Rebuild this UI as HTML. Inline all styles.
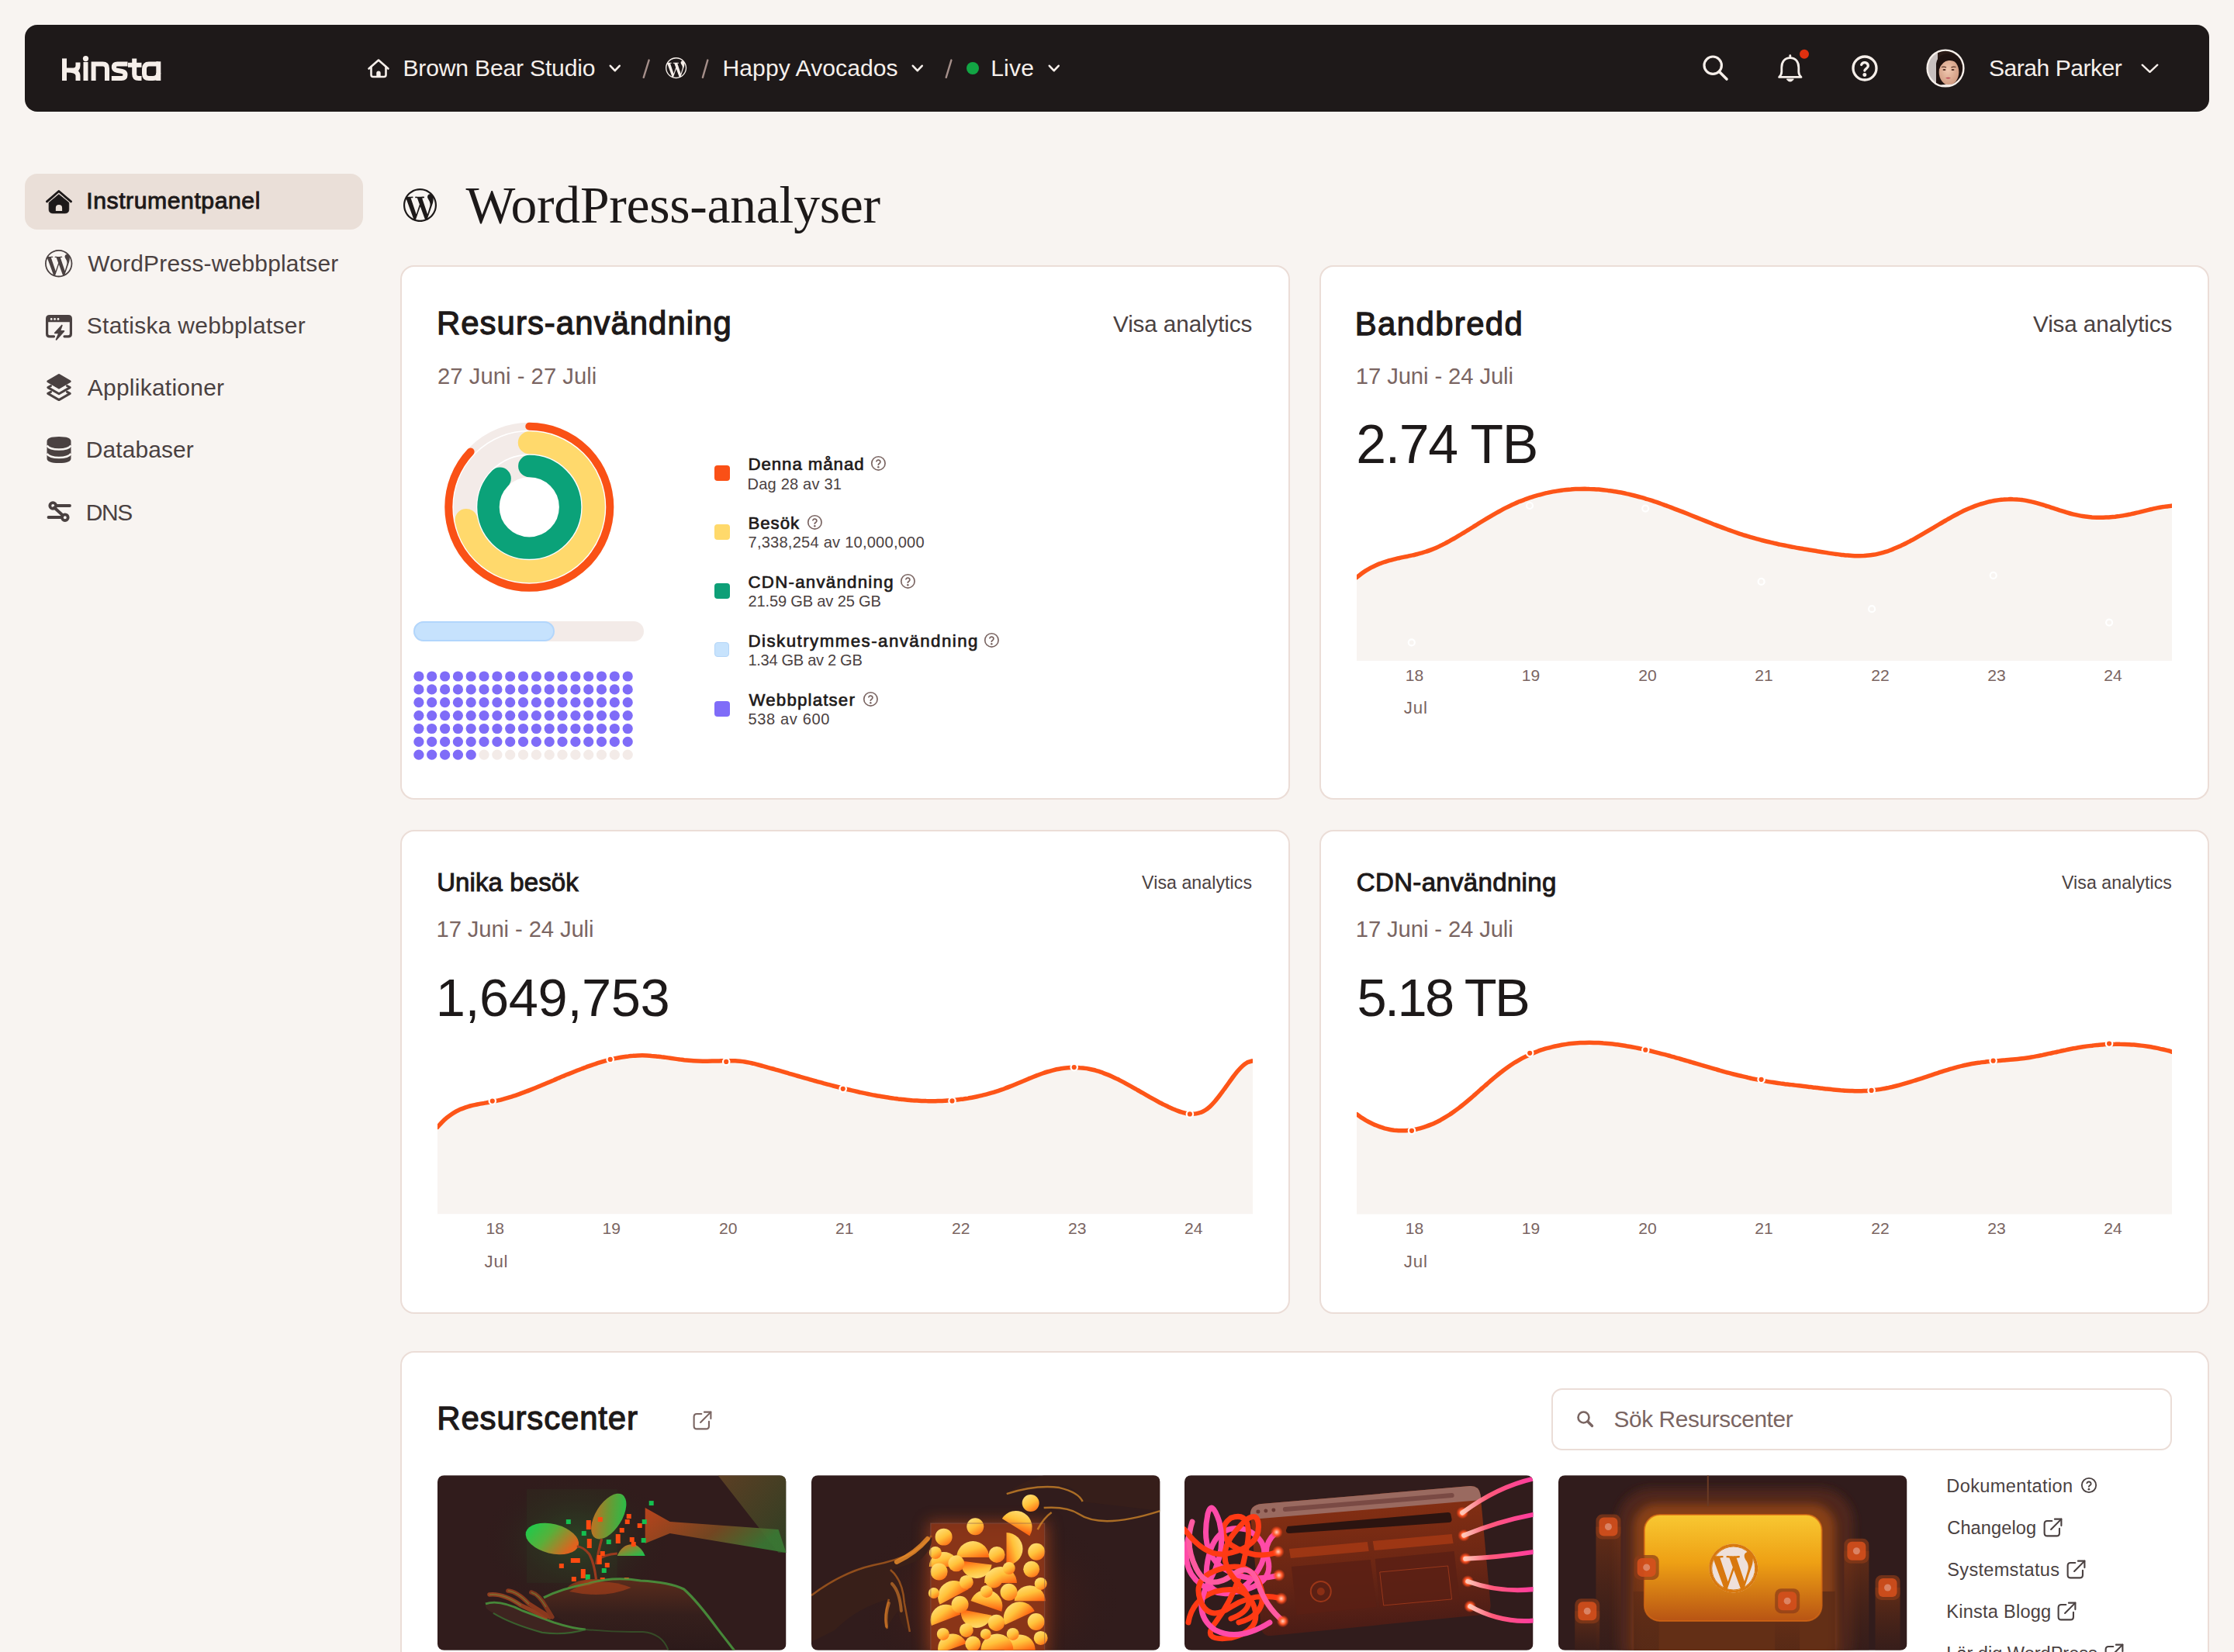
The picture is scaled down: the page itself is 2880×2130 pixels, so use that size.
<!DOCTYPE html><html><head><meta charset="utf-8"><title>WordPress-analyser</title><style>
html,body{margin:0;padding:0;width:2880px;height:2130px;overflow:hidden;background:#f8f4f1;font-family:"Liberation Sans",sans-serif;}
.a{position:absolute;}.t{position:absolute;white-space:nowrap;line-height:1;}
svg{position:absolute;overflow:visible;}
</style></head><body>
<div class="a" style="left:0;top:0;width:2880px;height:2130px;overflow:hidden">
<div class="a" style="left:32px;top:32px;width:2816px;height:112px;border-radius:16px;background:#1e1919"></div>
<div class="a" style="left:32px;top:224px;width:436px;height:72px;border-radius:16px;background:#eadfd8"></div>
<div class="a" style="left:516px;top:342px;width:1143px;height:685px;border:2px solid #ebddd7;border-radius:18px;background:#fff"></div>
<div class="a" style="left:1701px;top:342px;width:1143px;height:685px;border:2px solid #ebddd7;border-radius:18px;background:#fff"></div>
<div class="a" style="left:516px;top:1070px;width:1143px;height:620px;border:2px solid #ebddd7;border-radius:18px;background:#fff"></div>
<div class="a" style="left:1701px;top:1070px;width:1143px;height:620px;border:2px solid #ebddd7;border-radius:18px;background:#fff"></div>
<div class="a" style="left:516px;top:1742px;width:2328px;height:496px;border:2px solid #ebddd7;border-radius:18px;background:#fff"></div>
<svg style="left:0;top:0" width="2880" height="2130"><defs><clipPath id="cl2"><rect x="1749" y="560" width="1051" height="292"/></clipPath></defs><g clip-path="url(#cl2)"><path d="M1749.0 744.5 C1750.0 743.7 1753.0 741.2 1755.0 739.7 C1757.0 738.2 1759.0 736.9 1761.0 735.6 C1763.0 734.4 1765.0 733.2 1767.0 732.1 C1769.0 731.1 1771.0 730.1 1773.0 729.2 C1775.0 728.3 1777.0 727.4 1779.0 726.7 C1781.0 725.9 1783.0 725.2 1785.0 724.5 C1787.0 723.9 1789.0 723.3 1791.0 722.7 C1793.0 722.1 1795.0 721.6 1797.0 721.1 C1799.0 720.6 1801.0 720.2 1803.0 719.7 C1805.0 719.3 1807.0 718.9 1809.0 718.4 C1811.0 718.0 1813.0 717.6 1815.0 717.2 C1817.0 716.7 1819.0 716.3 1821.0 715.9 C1823.0 715.4 1825.0 715.0 1827.0 714.5 C1829.0 714.0 1831.0 713.4 1833.0 712.9 C1835.0 712.3 1837.0 711.7 1839.0 711.0 C1841.0 710.4 1843.0 709.7 1845.0 708.9 C1847.0 708.1 1849.0 707.3 1851.0 706.4 C1853.0 705.5 1855.0 704.6 1857.0 703.6 C1859.0 702.7 1861.0 701.6 1863.0 700.6 C1865.0 699.5 1867.0 698.5 1869.0 697.4 C1871.0 696.3 1873.0 695.1 1875.0 694.0 C1877.0 692.8 1879.0 691.6 1881.0 690.4 C1883.0 689.3 1885.0 688.0 1887.0 686.8 C1889.0 685.6 1891.0 684.4 1893.0 683.2 C1895.0 681.9 1897.0 680.7 1899.0 679.5 C1901.0 678.2 1903.0 677.0 1905.0 675.7 C1907.0 674.5 1909.0 673.3 1911.0 672.0 C1913.0 670.8 1915.0 669.6 1917.0 668.4 C1919.0 667.2 1921.0 666.0 1923.0 664.8 C1925.0 663.7 1927.0 662.5 1929.0 661.4 C1931.0 660.3 1933.0 659.2 1935.0 658.1 C1937.0 657.0 1939.0 655.9 1941.0 654.9 C1943.0 653.9 1945.0 652.9 1947.0 652.0 C1949.0 651.0 1951.0 650.1 1953.0 649.2 C1955.0 648.3 1957.0 647.5 1959.0 646.6 C1961.0 645.8 1963.0 645.0 1965.0 644.3 C1967.0 643.5 1969.0 642.8 1971.0 642.1 C1973.0 641.4 1975.0 640.8 1977.0 640.1 C1979.0 639.5 1981.0 638.9 1983.0 638.4 C1985.0 637.8 1987.0 637.3 1989.0 636.8 C1991.0 636.3 1993.0 635.8 1995.0 635.4 C1997.0 634.9 1999.0 634.5 2001.0 634.1 C2003.0 633.8 2005.0 633.4 2007.0 633.1 C2009.0 632.8 2011.0 632.5 2013.0 632.2 C2015.0 631.9 2017.0 631.7 2019.0 631.5 C2021.0 631.3 2023.0 631.1 2025.0 631.0 C2027.0 630.8 2029.0 630.7 2031.0 630.6 C2033.0 630.5 2035.0 630.4 2037.0 630.4 C2039.0 630.3 2041.0 630.3 2043.0 630.3 C2045.0 630.4 2047.0 630.4 2049.0 630.5 C2051.0 630.5 2053.0 630.6 2055.0 630.7 C2057.0 630.8 2059.0 631.0 2061.0 631.1 C2063.0 631.3 2065.0 631.5 2067.0 631.7 C2069.0 631.9 2071.0 632.1 2073.0 632.4 C2075.0 632.6 2077.0 632.9 2079.0 633.2 C2081.0 633.5 2083.0 633.9 2085.0 634.2 C2087.0 634.6 2089.0 634.9 2091.0 635.3 C2093.0 635.7 2095.0 636.1 2097.0 636.6 C2099.0 637.0 2101.0 637.5 2103.0 638.0 C2105.0 638.4 2107.0 638.9 2109.0 639.5 C2111.0 640.0 2113.0 640.5 2115.0 641.1 C2117.0 641.7 2119.0 642.2 2121.0 642.8 C2123.0 643.4 2125.0 644.1 2127.0 644.7 C2129.0 645.3 2131.0 646.0 2133.0 646.7 C2135.0 647.3 2137.0 648.0 2139.0 648.7 C2141.0 649.4 2143.0 650.1 2145.0 650.8 C2147.0 651.5 2149.0 652.3 2151.0 653.0 C2153.0 653.8 2155.0 654.5 2157.0 655.3 C2159.0 656.0 2161.0 656.8 2163.0 657.6 C2165.0 658.3 2167.0 659.1 2169.0 659.9 C2171.0 660.7 2173.0 661.5 2175.0 662.3 C2177.0 663.1 2179.0 663.9 2181.0 664.7 C2183.0 665.5 2185.0 666.3 2187.0 667.1 C2189.0 667.9 2191.0 668.7 2193.0 669.5 C2195.0 670.3 2197.0 671.1 2199.0 671.9 C2201.0 672.7 2203.0 673.5 2205.0 674.3 C2207.0 675.1 2209.0 675.8 2211.0 676.6 C2213.0 677.4 2215.0 678.2 2217.0 678.9 C2219.0 679.7 2221.0 680.5 2223.0 681.2 C2225.0 681.9 2227.0 682.7 2229.0 683.4 C2231.0 684.1 2233.0 684.8 2235.0 685.5 C2237.0 686.2 2239.0 686.9 2241.0 687.6 C2243.0 688.3 2245.0 688.9 2247.0 689.6 C2249.0 690.2 2251.0 690.8 2253.0 691.4 C2255.0 692.1 2257.0 692.6 2259.0 693.2 C2261.0 693.8 2263.0 694.4 2265.0 694.9 C2267.0 695.4 2269.0 696.0 2271.0 696.5 C2273.0 697.0 2275.0 697.5 2277.0 698.0 C2279.0 698.5 2281.0 699.0 2283.0 699.4 C2285.0 699.9 2287.0 700.4 2289.0 700.8 C2291.0 701.2 2293.0 701.7 2295.0 702.1 C2297.0 702.5 2299.0 702.9 2301.0 703.3 C2303.0 703.7 2305.0 704.1 2307.0 704.5 C2309.0 704.9 2311.0 705.3 2313.0 705.6 C2315.0 706.0 2317.0 706.4 2319.0 706.7 C2321.0 707.1 2323.0 707.4 2325.0 707.8 C2327.0 708.1 2329.0 708.5 2331.0 708.8 C2333.0 709.1 2335.0 709.5 2337.0 709.8 C2339.0 710.1 2341.0 710.4 2343.0 710.8 C2345.0 711.1 2347.0 711.4 2349.0 711.7 C2351.0 712.0 2353.0 712.3 2355.0 712.6 C2357.0 713.0 2359.0 713.3 2361.0 713.6 C2363.0 713.9 2365.0 714.2 2367.0 714.4 C2369.0 714.7 2371.0 715.0 2373.0 715.2 C2375.0 715.4 2377.0 715.7 2379.0 715.9 C2381.0 716.0 2383.0 716.2 2385.0 716.3 C2387.0 716.5 2389.0 716.6 2391.0 716.7 C2393.0 716.7 2395.0 716.7 2397.0 716.7 C2399.0 716.7 2401.0 716.7 2403.0 716.6 C2405.0 716.4 2407.0 716.3 2409.0 716.1 C2411.0 715.9 2413.0 715.6 2415.0 715.3 C2417.0 715.0 2419.0 714.6 2421.0 714.1 C2423.0 713.7 2425.0 713.2 2427.0 712.6 C2429.0 712.1 2431.0 711.4 2433.0 710.8 C2435.0 710.1 2437.0 709.3 2439.0 708.6 C2441.0 707.8 2443.0 707.0 2445.0 706.1 C2447.0 705.2 2449.0 704.3 2451.0 703.4 C2453.0 702.4 2455.0 701.5 2457.0 700.5 C2459.0 699.4 2461.0 698.4 2463.0 697.3 C2465.0 696.3 2467.0 695.2 2469.0 694.1 C2471.0 692.9 2473.0 691.8 2475.0 690.7 C2477.0 689.5 2479.0 688.3 2481.0 687.2 C2483.0 686.0 2485.0 684.8 2487.0 683.6 C2489.0 682.4 2491.0 681.2 2493.0 680.1 C2495.0 678.9 2497.0 677.7 2499.0 676.5 C2501.0 675.3 2503.0 674.1 2505.0 673.0 C2507.0 671.8 2509.0 670.7 2511.0 669.5 C2513.0 668.4 2515.0 667.3 2517.0 666.2 C2519.0 665.1 2521.0 664.0 2523.0 663.0 C2525.0 661.9 2527.0 660.9 2529.0 659.9 C2531.0 658.9 2533.0 658.0 2535.0 657.1 C2537.0 656.2 2539.0 655.3 2541.0 654.5 C2543.0 653.6 2545.0 652.9 2547.0 652.1 C2549.0 651.4 2551.0 650.7 2553.0 650.0 C2555.0 649.4 2557.0 648.8 2559.0 648.3 C2561.0 647.7 2563.0 647.2 2565.0 646.7 C2567.0 646.3 2569.0 645.9 2571.0 645.5 C2573.0 645.2 2575.0 644.9 2577.0 644.6 C2579.0 644.3 2581.0 644.1 2583.0 644.0 C2585.0 643.8 2587.0 643.7 2589.0 643.7 C2591.0 643.6 2593.0 643.6 2595.0 643.7 C2597.0 643.7 2599.0 643.8 2601.0 644.0 C2603.0 644.1 2605.0 644.4 2607.0 644.6 C2609.0 644.9 2611.0 645.2 2613.0 645.6 C2615.0 646.0 2617.0 646.4 2619.0 646.9 C2621.0 647.3 2623.0 647.8 2625.0 648.4 C2627.0 648.9 2629.0 649.5 2631.0 650.1 C2633.0 650.7 2635.0 651.3 2637.0 652.0 C2639.0 652.6 2641.0 653.3 2643.0 653.9 C2645.0 654.6 2647.0 655.2 2649.0 655.9 C2651.0 656.5 2653.0 657.2 2655.0 657.9 C2657.0 658.5 2659.0 659.1 2661.0 659.7 C2663.0 660.4 2665.0 661.0 2667.0 661.5 C2669.0 662.1 2671.0 662.6 2673.0 663.1 C2675.0 663.6 2677.0 664.0 2679.0 664.4 C2681.0 664.8 2683.0 665.2 2685.0 665.5 C2687.0 665.8 2689.0 666.1 2691.0 666.3 C2693.0 666.6 2695.0 666.7 2697.0 666.9 C2699.0 667.0 2701.0 667.1 2703.0 667.2 C2705.0 667.3 2707.0 667.3 2709.0 667.3 C2711.0 667.3 2713.0 667.2 2715.0 667.1 C2717.0 667.0 2719.0 666.9 2721.0 666.7 C2723.0 666.6 2725.0 666.4 2727.0 666.2 C2729.0 665.9 2731.0 665.7 2733.0 665.4 C2735.0 665.1 2737.0 664.8 2739.0 664.4 C2741.0 664.1 2743.0 663.7 2745.0 663.3 C2747.0 662.9 2749.0 662.4 2751.0 662.0 C2753.0 661.5 2755.0 661.0 2757.0 660.6 C2759.0 660.1 2761.0 659.6 2763.0 659.1 C2765.0 658.6 2767.0 658.1 2769.0 657.6 C2771.0 657.1 2773.0 656.6 2775.0 656.2 C2777.0 655.7 2779.0 655.3 2781.0 654.9 C2783.0 654.5 2785.0 654.1 2787.0 653.8 C2789.0 653.4 2791.0 653.1 2793.0 652.9 C2795.0 652.7 2797.8 652.4 2799.0 652.3 C2800.2 652.2 2799.8 652.3 2800.0 652.2 L2800 852 L1749 852 Z" fill="#f8f4f1"/><path d="M1749.0 744.5 C1750.0 743.7 1753.0 741.2 1755.0 739.7 C1757.0 738.2 1759.0 736.9 1761.0 735.6 C1763.0 734.4 1765.0 733.2 1767.0 732.1 C1769.0 731.1 1771.0 730.1 1773.0 729.2 C1775.0 728.3 1777.0 727.4 1779.0 726.7 C1781.0 725.9 1783.0 725.2 1785.0 724.5 C1787.0 723.9 1789.0 723.3 1791.0 722.7 C1793.0 722.1 1795.0 721.6 1797.0 721.1 C1799.0 720.6 1801.0 720.2 1803.0 719.7 C1805.0 719.3 1807.0 718.9 1809.0 718.4 C1811.0 718.0 1813.0 717.6 1815.0 717.2 C1817.0 716.7 1819.0 716.3 1821.0 715.9 C1823.0 715.4 1825.0 715.0 1827.0 714.5 C1829.0 714.0 1831.0 713.4 1833.0 712.9 C1835.0 712.3 1837.0 711.7 1839.0 711.0 C1841.0 710.4 1843.0 709.7 1845.0 708.9 C1847.0 708.1 1849.0 707.3 1851.0 706.4 C1853.0 705.5 1855.0 704.6 1857.0 703.6 C1859.0 702.7 1861.0 701.6 1863.0 700.6 C1865.0 699.5 1867.0 698.5 1869.0 697.4 C1871.0 696.3 1873.0 695.1 1875.0 694.0 C1877.0 692.8 1879.0 691.6 1881.0 690.4 C1883.0 689.3 1885.0 688.0 1887.0 686.8 C1889.0 685.6 1891.0 684.4 1893.0 683.2 C1895.0 681.9 1897.0 680.7 1899.0 679.5 C1901.0 678.2 1903.0 677.0 1905.0 675.7 C1907.0 674.5 1909.0 673.3 1911.0 672.0 C1913.0 670.8 1915.0 669.6 1917.0 668.4 C1919.0 667.2 1921.0 666.0 1923.0 664.8 C1925.0 663.7 1927.0 662.5 1929.0 661.4 C1931.0 660.3 1933.0 659.2 1935.0 658.1 C1937.0 657.0 1939.0 655.9 1941.0 654.9 C1943.0 653.9 1945.0 652.9 1947.0 652.0 C1949.0 651.0 1951.0 650.1 1953.0 649.2 C1955.0 648.3 1957.0 647.5 1959.0 646.6 C1961.0 645.8 1963.0 645.0 1965.0 644.3 C1967.0 643.5 1969.0 642.8 1971.0 642.1 C1973.0 641.4 1975.0 640.8 1977.0 640.1 C1979.0 639.5 1981.0 638.9 1983.0 638.4 C1985.0 637.8 1987.0 637.3 1989.0 636.8 C1991.0 636.3 1993.0 635.8 1995.0 635.4 C1997.0 634.9 1999.0 634.5 2001.0 634.1 C2003.0 633.8 2005.0 633.4 2007.0 633.1 C2009.0 632.8 2011.0 632.5 2013.0 632.2 C2015.0 631.9 2017.0 631.7 2019.0 631.5 C2021.0 631.3 2023.0 631.1 2025.0 631.0 C2027.0 630.8 2029.0 630.7 2031.0 630.6 C2033.0 630.5 2035.0 630.4 2037.0 630.4 C2039.0 630.3 2041.0 630.3 2043.0 630.3 C2045.0 630.4 2047.0 630.4 2049.0 630.5 C2051.0 630.5 2053.0 630.6 2055.0 630.7 C2057.0 630.8 2059.0 631.0 2061.0 631.1 C2063.0 631.3 2065.0 631.5 2067.0 631.7 C2069.0 631.9 2071.0 632.1 2073.0 632.4 C2075.0 632.6 2077.0 632.9 2079.0 633.2 C2081.0 633.5 2083.0 633.9 2085.0 634.2 C2087.0 634.6 2089.0 634.9 2091.0 635.3 C2093.0 635.7 2095.0 636.1 2097.0 636.6 C2099.0 637.0 2101.0 637.5 2103.0 638.0 C2105.0 638.4 2107.0 638.9 2109.0 639.5 C2111.0 640.0 2113.0 640.5 2115.0 641.1 C2117.0 641.7 2119.0 642.2 2121.0 642.8 C2123.0 643.4 2125.0 644.1 2127.0 644.7 C2129.0 645.3 2131.0 646.0 2133.0 646.7 C2135.0 647.3 2137.0 648.0 2139.0 648.7 C2141.0 649.4 2143.0 650.1 2145.0 650.8 C2147.0 651.5 2149.0 652.3 2151.0 653.0 C2153.0 653.8 2155.0 654.5 2157.0 655.3 C2159.0 656.0 2161.0 656.8 2163.0 657.6 C2165.0 658.3 2167.0 659.1 2169.0 659.9 C2171.0 660.7 2173.0 661.5 2175.0 662.3 C2177.0 663.1 2179.0 663.9 2181.0 664.7 C2183.0 665.5 2185.0 666.3 2187.0 667.1 C2189.0 667.9 2191.0 668.7 2193.0 669.5 C2195.0 670.3 2197.0 671.1 2199.0 671.9 C2201.0 672.7 2203.0 673.5 2205.0 674.3 C2207.0 675.1 2209.0 675.8 2211.0 676.6 C2213.0 677.4 2215.0 678.2 2217.0 678.9 C2219.0 679.7 2221.0 680.5 2223.0 681.2 C2225.0 681.9 2227.0 682.7 2229.0 683.4 C2231.0 684.1 2233.0 684.8 2235.0 685.5 C2237.0 686.2 2239.0 686.9 2241.0 687.6 C2243.0 688.3 2245.0 688.9 2247.0 689.6 C2249.0 690.2 2251.0 690.8 2253.0 691.4 C2255.0 692.1 2257.0 692.6 2259.0 693.2 C2261.0 693.8 2263.0 694.4 2265.0 694.9 C2267.0 695.4 2269.0 696.0 2271.0 696.5 C2273.0 697.0 2275.0 697.5 2277.0 698.0 C2279.0 698.5 2281.0 699.0 2283.0 699.4 C2285.0 699.9 2287.0 700.4 2289.0 700.8 C2291.0 701.2 2293.0 701.7 2295.0 702.1 C2297.0 702.5 2299.0 702.9 2301.0 703.3 C2303.0 703.7 2305.0 704.1 2307.0 704.5 C2309.0 704.9 2311.0 705.3 2313.0 705.6 C2315.0 706.0 2317.0 706.4 2319.0 706.7 C2321.0 707.1 2323.0 707.4 2325.0 707.8 C2327.0 708.1 2329.0 708.5 2331.0 708.8 C2333.0 709.1 2335.0 709.5 2337.0 709.8 C2339.0 710.1 2341.0 710.4 2343.0 710.8 C2345.0 711.1 2347.0 711.4 2349.0 711.7 C2351.0 712.0 2353.0 712.3 2355.0 712.6 C2357.0 713.0 2359.0 713.3 2361.0 713.6 C2363.0 713.9 2365.0 714.2 2367.0 714.4 C2369.0 714.7 2371.0 715.0 2373.0 715.2 C2375.0 715.4 2377.0 715.7 2379.0 715.9 C2381.0 716.0 2383.0 716.2 2385.0 716.3 C2387.0 716.5 2389.0 716.6 2391.0 716.7 C2393.0 716.7 2395.0 716.7 2397.0 716.7 C2399.0 716.7 2401.0 716.7 2403.0 716.6 C2405.0 716.4 2407.0 716.3 2409.0 716.1 C2411.0 715.9 2413.0 715.6 2415.0 715.3 C2417.0 715.0 2419.0 714.6 2421.0 714.1 C2423.0 713.7 2425.0 713.2 2427.0 712.6 C2429.0 712.1 2431.0 711.4 2433.0 710.8 C2435.0 710.1 2437.0 709.3 2439.0 708.6 C2441.0 707.8 2443.0 707.0 2445.0 706.1 C2447.0 705.2 2449.0 704.3 2451.0 703.4 C2453.0 702.4 2455.0 701.5 2457.0 700.5 C2459.0 699.4 2461.0 698.4 2463.0 697.3 C2465.0 696.3 2467.0 695.2 2469.0 694.1 C2471.0 692.9 2473.0 691.8 2475.0 690.7 C2477.0 689.5 2479.0 688.3 2481.0 687.2 C2483.0 686.0 2485.0 684.8 2487.0 683.6 C2489.0 682.4 2491.0 681.2 2493.0 680.1 C2495.0 678.9 2497.0 677.7 2499.0 676.5 C2501.0 675.3 2503.0 674.1 2505.0 673.0 C2507.0 671.8 2509.0 670.7 2511.0 669.5 C2513.0 668.4 2515.0 667.3 2517.0 666.2 C2519.0 665.1 2521.0 664.0 2523.0 663.0 C2525.0 661.9 2527.0 660.9 2529.0 659.9 C2531.0 658.9 2533.0 658.0 2535.0 657.1 C2537.0 656.2 2539.0 655.3 2541.0 654.5 C2543.0 653.6 2545.0 652.9 2547.0 652.1 C2549.0 651.4 2551.0 650.7 2553.0 650.0 C2555.0 649.4 2557.0 648.8 2559.0 648.3 C2561.0 647.7 2563.0 647.2 2565.0 646.7 C2567.0 646.3 2569.0 645.9 2571.0 645.5 C2573.0 645.2 2575.0 644.9 2577.0 644.6 C2579.0 644.3 2581.0 644.1 2583.0 644.0 C2585.0 643.8 2587.0 643.7 2589.0 643.7 C2591.0 643.6 2593.0 643.6 2595.0 643.7 C2597.0 643.7 2599.0 643.8 2601.0 644.0 C2603.0 644.1 2605.0 644.4 2607.0 644.6 C2609.0 644.9 2611.0 645.2 2613.0 645.6 C2615.0 646.0 2617.0 646.4 2619.0 646.9 C2621.0 647.3 2623.0 647.8 2625.0 648.4 C2627.0 648.9 2629.0 649.5 2631.0 650.1 C2633.0 650.7 2635.0 651.3 2637.0 652.0 C2639.0 652.6 2641.0 653.3 2643.0 653.9 C2645.0 654.6 2647.0 655.2 2649.0 655.9 C2651.0 656.5 2653.0 657.2 2655.0 657.9 C2657.0 658.5 2659.0 659.1 2661.0 659.7 C2663.0 660.4 2665.0 661.0 2667.0 661.5 C2669.0 662.1 2671.0 662.6 2673.0 663.1 C2675.0 663.6 2677.0 664.0 2679.0 664.4 C2681.0 664.8 2683.0 665.2 2685.0 665.5 C2687.0 665.8 2689.0 666.1 2691.0 666.3 C2693.0 666.6 2695.0 666.7 2697.0 666.9 C2699.0 667.0 2701.0 667.1 2703.0 667.2 C2705.0 667.3 2707.0 667.3 2709.0 667.3 C2711.0 667.3 2713.0 667.2 2715.0 667.1 C2717.0 667.0 2719.0 666.9 2721.0 666.7 C2723.0 666.6 2725.0 666.4 2727.0 666.2 C2729.0 665.9 2731.0 665.7 2733.0 665.4 C2735.0 665.1 2737.0 664.8 2739.0 664.4 C2741.0 664.1 2743.0 663.7 2745.0 663.3 C2747.0 662.9 2749.0 662.4 2751.0 662.0 C2753.0 661.5 2755.0 661.0 2757.0 660.6 C2759.0 660.1 2761.0 659.6 2763.0 659.1 C2765.0 658.6 2767.0 658.1 2769.0 657.6 C2771.0 657.1 2773.0 656.6 2775.0 656.2 C2777.0 655.7 2779.0 655.3 2781.0 654.9 C2783.0 654.5 2785.0 654.1 2787.0 653.8 C2789.0 653.4 2791.0 653.1 2793.0 652.9 C2795.0 652.7 2797.8 652.4 2799.0 652.3 C2800.2 652.2 2799.8 652.3 2800.0 652.2" fill="none" stroke="#fd5518" stroke-width="5.5" stroke-linecap="round"/></g><circle cx="1819.8" cy="828.4" r="4" fill="none" stroke="#fff" stroke-width="2.2"/><circle cx="1972" cy="652" r="4" fill="none" stroke="#fff" stroke-width="2.2"/><circle cx="2121.2" cy="655.6" r="4" fill="none" stroke="#fff" stroke-width="2.2"/><circle cx="2270.6" cy="749.9" r="4" fill="none" stroke="#fff" stroke-width="2.2"/><circle cx="2413.1" cy="785.2" r="4" fill="none" stroke="#fff" stroke-width="2.2"/><circle cx="2569.7" cy="741.9" r="4" fill="none" stroke="#fff" stroke-width="2.2"/><circle cx="2719.1" cy="802.6" r="4" fill="none" stroke="#fff" stroke-width="2.2"/></svg>
<svg style="left:0;top:0" width="2880" height="2130"><defs><clipPath id="cl3"><rect x="564" y="1300" width="1051" height="265.5"/></clipPath></defs><g clip-path="url(#cl3)"><path d="M564.0 1453.3 C565.0 1452.2 568.0 1448.7 570.0 1446.7 C572.0 1444.7 574.0 1442.9 576.0 1441.2 C578.0 1439.5 580.0 1438.1 582.0 1436.7 C584.0 1435.3 586.0 1434.1 588.0 1433.0 C590.0 1432.0 592.0 1431.0 594.0 1430.1 C596.0 1429.3 598.0 1428.5 600.0 1427.8 C602.0 1427.1 604.0 1426.6 606.0 1426.0 C608.0 1425.5 610.0 1425.0 612.0 1424.6 C614.0 1424.2 616.0 1423.8 618.0 1423.4 C620.0 1423.1 622.0 1422.7 624.0 1422.4 C626.0 1422.0 628.0 1421.7 630.0 1421.3 C632.0 1421.0 634.0 1420.6 636.0 1420.2 C638.0 1419.8 640.0 1419.3 642.0 1418.9 C644.0 1418.4 646.0 1417.9 648.0 1417.3 C650.0 1416.8 652.0 1416.2 654.0 1415.6 C656.0 1415.0 658.0 1414.4 660.0 1413.8 C662.0 1413.1 664.0 1412.5 666.0 1411.8 C668.0 1411.1 670.0 1410.4 672.0 1409.6 C674.0 1408.9 676.0 1408.2 678.0 1407.4 C680.0 1406.7 682.0 1405.9 684.0 1405.1 C686.0 1404.3 688.0 1403.5 690.0 1402.7 C692.0 1401.9 694.0 1401.1 696.0 1400.2 C698.0 1399.4 700.0 1398.6 702.0 1397.7 C704.0 1396.9 706.0 1396.1 708.0 1395.2 C710.0 1394.4 712.0 1393.5 714.0 1392.7 C716.0 1391.8 718.0 1391.0 720.0 1390.1 C722.0 1389.3 724.0 1388.5 726.0 1387.6 C728.0 1386.8 730.0 1386.0 732.0 1385.1 C734.0 1384.3 736.0 1383.5 738.0 1382.7 C740.0 1381.9 742.0 1381.1 744.0 1380.3 C746.0 1379.5 748.0 1378.7 750.0 1378.0 C752.0 1377.2 754.0 1376.5 756.0 1375.7 C758.0 1375.0 760.0 1374.3 762.0 1373.6 C764.0 1372.9 766.0 1372.2 768.0 1371.6 C770.0 1370.9 772.0 1370.3 774.0 1369.7 C776.0 1369.1 778.0 1368.5 780.0 1367.9 C782.0 1367.4 784.0 1366.9 786.0 1366.4 C788.0 1365.9 790.0 1365.4 792.0 1364.9 C794.0 1364.5 796.0 1364.1 798.0 1363.7 C800.0 1363.3 802.0 1363.0 804.0 1362.7 C806.0 1362.4 808.0 1362.1 810.0 1361.9 C812.0 1361.6 814.0 1361.4 816.0 1361.3 C818.0 1361.1 820.0 1361.0 822.0 1360.9 C824.0 1360.8 826.0 1360.8 828.0 1360.8 C830.0 1360.8 832.0 1360.9 834.0 1361.0 C836.0 1361.1 838.0 1361.2 840.0 1361.4 C842.0 1361.5 844.0 1361.7 846.0 1361.9 C848.0 1362.1 850.0 1362.4 852.0 1362.6 C854.0 1362.9 856.0 1363.1 858.0 1363.4 C860.0 1363.7 862.0 1364.0 864.0 1364.2 C866.0 1364.5 868.0 1364.8 870.0 1365.1 C872.0 1365.4 874.0 1365.7 876.0 1365.9 C878.0 1366.2 880.0 1366.4 882.0 1366.7 C884.0 1366.9 886.0 1367.1 888.0 1367.3 C890.0 1367.5 892.0 1367.7 894.0 1367.8 C896.0 1367.9 898.0 1368.0 900.0 1368.1 C902.0 1368.2 904.0 1368.2 906.0 1368.2 C908.0 1368.2 910.0 1368.2 912.0 1368.2 C914.0 1368.2 916.0 1368.2 918.0 1368.1 C920.0 1368.1 922.0 1368.0 924.0 1368.0 C926.0 1367.9 928.0 1367.9 930.0 1367.8 C932.0 1367.8 934.0 1367.8 936.0 1367.7 C938.0 1367.7 940.0 1367.7 942.0 1367.7 C944.0 1367.7 946.0 1367.8 948.0 1367.8 C950.0 1367.9 952.0 1368.1 954.0 1368.3 C956.0 1368.5 958.0 1368.7 960.0 1369.0 C962.0 1369.3 964.0 1369.7 966.0 1370.1 C968.0 1370.5 970.0 1371.0 972.0 1371.4 C974.0 1371.9 976.0 1372.4 978.0 1373.0 C980.0 1373.5 982.0 1374.0 984.0 1374.6 C986.0 1375.1 988.0 1375.7 990.0 1376.3 C992.0 1376.8 994.0 1377.4 996.0 1378.0 C998.0 1378.6 1000.0 1379.1 1002.0 1379.7 C1004.0 1380.3 1006.0 1380.9 1008.0 1381.4 C1010.0 1382.0 1012.0 1382.6 1014.0 1383.2 C1016.0 1383.8 1018.0 1384.3 1020.0 1384.9 C1022.0 1385.5 1024.0 1386.1 1026.0 1386.6 C1028.0 1387.2 1030.0 1387.8 1032.0 1388.4 C1034.0 1388.9 1036.0 1389.5 1038.0 1390.1 C1040.0 1390.7 1042.0 1391.2 1044.0 1391.8 C1046.0 1392.4 1048.0 1392.9 1050.0 1393.5 C1052.0 1394.0 1054.0 1394.6 1056.0 1395.1 C1058.0 1395.7 1060.0 1396.2 1062.0 1396.8 C1064.0 1397.3 1066.0 1397.9 1068.0 1398.4 C1070.0 1398.9 1072.0 1399.5 1074.0 1400.0 C1076.0 1400.5 1078.0 1401.0 1080.0 1401.5 C1082.0 1402.0 1084.0 1402.5 1086.0 1403.0 C1088.0 1403.5 1090.0 1404.0 1092.0 1404.5 C1094.0 1405.0 1096.0 1405.5 1098.0 1405.9 C1100.0 1406.4 1102.0 1406.9 1104.0 1407.3 C1106.0 1407.7 1108.0 1408.2 1110.0 1408.6 C1112.0 1409.1 1114.0 1409.5 1116.0 1409.9 C1118.0 1410.3 1120.0 1410.7 1122.0 1411.1 C1124.0 1411.5 1126.0 1411.9 1128.0 1412.2 C1130.0 1412.6 1132.0 1413.0 1134.0 1413.3 C1136.0 1413.7 1138.0 1414.0 1140.0 1414.3 C1142.0 1414.6 1144.0 1415.0 1146.0 1415.3 C1148.0 1415.6 1150.0 1415.8 1152.0 1416.1 C1154.0 1416.4 1156.0 1416.6 1158.0 1416.9 C1160.0 1417.1 1162.0 1417.4 1164.0 1417.6 C1166.0 1417.8 1168.0 1418.0 1170.0 1418.2 C1172.0 1418.4 1174.0 1418.5 1176.0 1418.7 C1178.0 1418.8 1180.0 1419.0 1182.0 1419.1 C1184.0 1419.2 1186.0 1419.3 1188.0 1419.4 C1190.0 1419.5 1192.0 1419.5 1194.0 1419.6 C1196.0 1419.6 1198.0 1419.7 1200.0 1419.7 C1202.0 1419.7 1204.0 1419.7 1206.0 1419.7 C1208.0 1419.6 1210.0 1419.6 1212.0 1419.5 C1214.0 1419.5 1216.0 1419.4 1218.0 1419.3 C1220.0 1419.2 1222.0 1419.0 1224.0 1418.9 C1226.0 1418.7 1228.0 1418.6 1230.0 1418.4 C1232.0 1418.2 1234.0 1418.0 1236.0 1417.7 C1238.0 1417.5 1240.0 1417.2 1242.0 1417.0 C1244.0 1416.7 1246.0 1416.4 1248.0 1416.1 C1250.0 1415.7 1252.0 1415.4 1254.0 1415.0 C1256.0 1414.6 1258.0 1414.2 1260.0 1413.8 C1262.0 1413.4 1264.0 1412.9 1266.0 1412.4 C1268.0 1412.0 1270.0 1411.4 1272.0 1410.9 C1274.0 1410.4 1276.0 1409.8 1278.0 1409.2 C1280.0 1408.7 1282.0 1408.1 1284.0 1407.4 C1286.0 1406.8 1288.0 1406.1 1290.0 1405.4 C1292.0 1404.7 1294.0 1404.0 1296.0 1403.2 C1298.0 1402.5 1300.0 1401.7 1302.0 1400.9 C1304.0 1400.1 1306.0 1399.3 1308.0 1398.5 C1310.0 1397.7 1312.0 1396.8 1314.0 1396.0 C1316.0 1395.1 1318.0 1394.3 1320.0 1393.5 C1322.0 1392.6 1324.0 1391.8 1326.0 1390.9 C1328.0 1390.1 1330.0 1389.3 1332.0 1388.5 C1334.0 1387.7 1336.0 1386.9 1338.0 1386.2 C1340.0 1385.4 1342.0 1384.7 1344.0 1384.0 C1346.0 1383.3 1348.0 1382.6 1350.0 1382.0 C1352.0 1381.4 1354.0 1380.8 1356.0 1380.3 C1358.0 1379.8 1360.0 1379.3 1362.0 1378.8 C1364.0 1378.4 1366.0 1378.0 1368.0 1377.7 C1370.0 1377.4 1372.0 1377.1 1374.0 1376.9 C1376.0 1376.7 1378.0 1376.6 1380.0 1376.5 C1382.0 1376.4 1384.0 1376.4 1386.0 1376.4 C1388.0 1376.4 1390.0 1376.5 1392.0 1376.7 C1394.0 1376.8 1396.0 1377.0 1398.0 1377.3 C1400.0 1377.5 1402.0 1377.8 1404.0 1378.2 C1406.0 1378.6 1408.0 1379.0 1410.0 1379.5 C1412.0 1380.1 1414.0 1380.6 1416.0 1381.2 C1418.0 1381.9 1420.0 1382.5 1422.0 1383.3 C1424.0 1384.0 1426.0 1384.8 1428.0 1385.6 C1430.0 1386.4 1432.0 1387.3 1434.0 1388.2 C1436.0 1389.1 1438.0 1390.1 1440.0 1391.1 C1442.0 1392.0 1444.0 1393.1 1446.0 1394.1 C1448.0 1395.1 1450.0 1396.2 1452.0 1397.3 C1454.0 1398.4 1456.0 1399.5 1458.0 1400.6 C1460.0 1401.7 1462.0 1402.9 1464.0 1404.0 C1466.0 1405.2 1468.0 1406.3 1470.0 1407.5 C1472.0 1408.6 1474.0 1409.8 1476.0 1410.9 C1478.0 1412.1 1480.0 1413.2 1482.0 1414.4 C1484.0 1415.5 1486.0 1416.6 1488.0 1417.7 C1490.0 1418.8 1492.0 1419.9 1494.0 1421.0 C1496.0 1422.0 1498.0 1423.1 1500.0 1424.1 C1502.0 1425.1 1504.0 1426.0 1506.0 1427.0 C1508.0 1427.9 1510.0 1428.8 1512.0 1429.7 C1514.0 1430.5 1516.0 1431.4 1518.0 1432.1 C1520.0 1432.9 1522.0 1433.6 1524.0 1434.2 C1526.0 1434.8 1528.0 1435.3 1530.0 1435.7 C1532.0 1436.0 1534.0 1436.3 1536.0 1436.3 C1538.0 1436.4 1540.0 1436.3 1542.0 1435.9 C1544.0 1435.6 1546.0 1435.1 1548.0 1434.3 C1550.0 1433.6 1552.0 1432.6 1554.0 1431.3 C1556.0 1430.0 1558.0 1428.4 1560.0 1426.6 C1562.0 1424.8 1564.0 1422.6 1566.0 1420.3 C1568.0 1418.0 1570.0 1415.4 1572.0 1412.8 C1574.0 1410.2 1576.0 1407.4 1578.0 1404.7 C1580.0 1401.9 1582.0 1399.0 1584.0 1396.3 C1586.0 1393.5 1588.0 1390.7 1590.0 1388.0 C1592.0 1385.4 1594.0 1382.8 1596.0 1380.5 C1598.0 1378.2 1600.0 1376.0 1602.0 1374.2 C1604.0 1372.4 1606.0 1370.9 1608.0 1369.8 C1610.0 1368.8 1612.8 1368.3 1614.0 1368.0 C1615.2 1367.7 1614.8 1368.0 1615.0 1368.0 L1615 1565.5 L564 1565.5 Z" fill="#f8f4f1"/><path d="M564.0 1453.3 C565.0 1452.2 568.0 1448.7 570.0 1446.7 C572.0 1444.7 574.0 1442.9 576.0 1441.2 C578.0 1439.5 580.0 1438.1 582.0 1436.7 C584.0 1435.3 586.0 1434.1 588.0 1433.0 C590.0 1432.0 592.0 1431.0 594.0 1430.1 C596.0 1429.3 598.0 1428.5 600.0 1427.8 C602.0 1427.1 604.0 1426.6 606.0 1426.0 C608.0 1425.5 610.0 1425.0 612.0 1424.6 C614.0 1424.2 616.0 1423.8 618.0 1423.4 C620.0 1423.1 622.0 1422.7 624.0 1422.4 C626.0 1422.0 628.0 1421.7 630.0 1421.3 C632.0 1421.0 634.0 1420.6 636.0 1420.2 C638.0 1419.8 640.0 1419.3 642.0 1418.9 C644.0 1418.4 646.0 1417.9 648.0 1417.3 C650.0 1416.8 652.0 1416.2 654.0 1415.6 C656.0 1415.0 658.0 1414.4 660.0 1413.8 C662.0 1413.1 664.0 1412.5 666.0 1411.8 C668.0 1411.1 670.0 1410.4 672.0 1409.6 C674.0 1408.9 676.0 1408.2 678.0 1407.4 C680.0 1406.7 682.0 1405.9 684.0 1405.1 C686.0 1404.3 688.0 1403.5 690.0 1402.7 C692.0 1401.9 694.0 1401.1 696.0 1400.2 C698.0 1399.4 700.0 1398.6 702.0 1397.7 C704.0 1396.9 706.0 1396.1 708.0 1395.2 C710.0 1394.4 712.0 1393.5 714.0 1392.7 C716.0 1391.8 718.0 1391.0 720.0 1390.1 C722.0 1389.3 724.0 1388.5 726.0 1387.6 C728.0 1386.8 730.0 1386.0 732.0 1385.1 C734.0 1384.3 736.0 1383.5 738.0 1382.7 C740.0 1381.9 742.0 1381.1 744.0 1380.3 C746.0 1379.5 748.0 1378.7 750.0 1378.0 C752.0 1377.2 754.0 1376.5 756.0 1375.7 C758.0 1375.0 760.0 1374.3 762.0 1373.6 C764.0 1372.9 766.0 1372.2 768.0 1371.6 C770.0 1370.9 772.0 1370.3 774.0 1369.7 C776.0 1369.1 778.0 1368.5 780.0 1367.9 C782.0 1367.4 784.0 1366.9 786.0 1366.4 C788.0 1365.9 790.0 1365.4 792.0 1364.9 C794.0 1364.5 796.0 1364.1 798.0 1363.7 C800.0 1363.3 802.0 1363.0 804.0 1362.7 C806.0 1362.4 808.0 1362.1 810.0 1361.9 C812.0 1361.6 814.0 1361.4 816.0 1361.3 C818.0 1361.1 820.0 1361.0 822.0 1360.9 C824.0 1360.8 826.0 1360.8 828.0 1360.8 C830.0 1360.8 832.0 1360.9 834.0 1361.0 C836.0 1361.1 838.0 1361.2 840.0 1361.4 C842.0 1361.5 844.0 1361.7 846.0 1361.9 C848.0 1362.1 850.0 1362.4 852.0 1362.6 C854.0 1362.9 856.0 1363.1 858.0 1363.4 C860.0 1363.7 862.0 1364.0 864.0 1364.2 C866.0 1364.5 868.0 1364.8 870.0 1365.1 C872.0 1365.4 874.0 1365.7 876.0 1365.9 C878.0 1366.2 880.0 1366.4 882.0 1366.7 C884.0 1366.9 886.0 1367.1 888.0 1367.3 C890.0 1367.5 892.0 1367.7 894.0 1367.8 C896.0 1367.9 898.0 1368.0 900.0 1368.1 C902.0 1368.2 904.0 1368.2 906.0 1368.2 C908.0 1368.2 910.0 1368.2 912.0 1368.2 C914.0 1368.2 916.0 1368.2 918.0 1368.1 C920.0 1368.1 922.0 1368.0 924.0 1368.0 C926.0 1367.9 928.0 1367.9 930.0 1367.8 C932.0 1367.8 934.0 1367.8 936.0 1367.7 C938.0 1367.7 940.0 1367.7 942.0 1367.7 C944.0 1367.7 946.0 1367.8 948.0 1367.8 C950.0 1367.9 952.0 1368.1 954.0 1368.3 C956.0 1368.5 958.0 1368.7 960.0 1369.0 C962.0 1369.3 964.0 1369.7 966.0 1370.1 C968.0 1370.5 970.0 1371.0 972.0 1371.4 C974.0 1371.9 976.0 1372.4 978.0 1373.0 C980.0 1373.5 982.0 1374.0 984.0 1374.6 C986.0 1375.1 988.0 1375.7 990.0 1376.3 C992.0 1376.8 994.0 1377.4 996.0 1378.0 C998.0 1378.6 1000.0 1379.1 1002.0 1379.7 C1004.0 1380.3 1006.0 1380.9 1008.0 1381.4 C1010.0 1382.0 1012.0 1382.6 1014.0 1383.2 C1016.0 1383.8 1018.0 1384.3 1020.0 1384.9 C1022.0 1385.5 1024.0 1386.1 1026.0 1386.6 C1028.0 1387.2 1030.0 1387.8 1032.0 1388.4 C1034.0 1388.9 1036.0 1389.5 1038.0 1390.1 C1040.0 1390.7 1042.0 1391.2 1044.0 1391.8 C1046.0 1392.4 1048.0 1392.9 1050.0 1393.5 C1052.0 1394.0 1054.0 1394.6 1056.0 1395.1 C1058.0 1395.7 1060.0 1396.2 1062.0 1396.8 C1064.0 1397.3 1066.0 1397.9 1068.0 1398.4 C1070.0 1398.9 1072.0 1399.5 1074.0 1400.0 C1076.0 1400.5 1078.0 1401.0 1080.0 1401.5 C1082.0 1402.0 1084.0 1402.5 1086.0 1403.0 C1088.0 1403.5 1090.0 1404.0 1092.0 1404.5 C1094.0 1405.0 1096.0 1405.5 1098.0 1405.9 C1100.0 1406.4 1102.0 1406.9 1104.0 1407.3 C1106.0 1407.7 1108.0 1408.2 1110.0 1408.6 C1112.0 1409.1 1114.0 1409.5 1116.0 1409.9 C1118.0 1410.3 1120.0 1410.7 1122.0 1411.1 C1124.0 1411.5 1126.0 1411.9 1128.0 1412.2 C1130.0 1412.6 1132.0 1413.0 1134.0 1413.3 C1136.0 1413.7 1138.0 1414.0 1140.0 1414.3 C1142.0 1414.6 1144.0 1415.0 1146.0 1415.3 C1148.0 1415.6 1150.0 1415.8 1152.0 1416.1 C1154.0 1416.4 1156.0 1416.6 1158.0 1416.9 C1160.0 1417.1 1162.0 1417.4 1164.0 1417.6 C1166.0 1417.8 1168.0 1418.0 1170.0 1418.2 C1172.0 1418.4 1174.0 1418.5 1176.0 1418.7 C1178.0 1418.8 1180.0 1419.0 1182.0 1419.1 C1184.0 1419.2 1186.0 1419.3 1188.0 1419.4 C1190.0 1419.5 1192.0 1419.5 1194.0 1419.6 C1196.0 1419.6 1198.0 1419.7 1200.0 1419.7 C1202.0 1419.7 1204.0 1419.7 1206.0 1419.7 C1208.0 1419.6 1210.0 1419.6 1212.0 1419.5 C1214.0 1419.5 1216.0 1419.4 1218.0 1419.3 C1220.0 1419.2 1222.0 1419.0 1224.0 1418.9 C1226.0 1418.7 1228.0 1418.6 1230.0 1418.4 C1232.0 1418.2 1234.0 1418.0 1236.0 1417.7 C1238.0 1417.5 1240.0 1417.2 1242.0 1417.0 C1244.0 1416.7 1246.0 1416.4 1248.0 1416.1 C1250.0 1415.7 1252.0 1415.4 1254.0 1415.0 C1256.0 1414.6 1258.0 1414.2 1260.0 1413.8 C1262.0 1413.4 1264.0 1412.9 1266.0 1412.4 C1268.0 1412.0 1270.0 1411.4 1272.0 1410.9 C1274.0 1410.4 1276.0 1409.8 1278.0 1409.2 C1280.0 1408.7 1282.0 1408.1 1284.0 1407.4 C1286.0 1406.8 1288.0 1406.1 1290.0 1405.4 C1292.0 1404.7 1294.0 1404.0 1296.0 1403.2 C1298.0 1402.5 1300.0 1401.7 1302.0 1400.9 C1304.0 1400.1 1306.0 1399.3 1308.0 1398.5 C1310.0 1397.7 1312.0 1396.8 1314.0 1396.0 C1316.0 1395.1 1318.0 1394.3 1320.0 1393.5 C1322.0 1392.6 1324.0 1391.8 1326.0 1390.9 C1328.0 1390.1 1330.0 1389.3 1332.0 1388.5 C1334.0 1387.7 1336.0 1386.9 1338.0 1386.2 C1340.0 1385.4 1342.0 1384.7 1344.0 1384.0 C1346.0 1383.3 1348.0 1382.6 1350.0 1382.0 C1352.0 1381.4 1354.0 1380.8 1356.0 1380.3 C1358.0 1379.8 1360.0 1379.3 1362.0 1378.8 C1364.0 1378.4 1366.0 1378.0 1368.0 1377.7 C1370.0 1377.4 1372.0 1377.1 1374.0 1376.9 C1376.0 1376.7 1378.0 1376.6 1380.0 1376.5 C1382.0 1376.4 1384.0 1376.4 1386.0 1376.4 C1388.0 1376.4 1390.0 1376.5 1392.0 1376.7 C1394.0 1376.8 1396.0 1377.0 1398.0 1377.3 C1400.0 1377.5 1402.0 1377.8 1404.0 1378.2 C1406.0 1378.6 1408.0 1379.0 1410.0 1379.5 C1412.0 1380.1 1414.0 1380.6 1416.0 1381.2 C1418.0 1381.9 1420.0 1382.5 1422.0 1383.3 C1424.0 1384.0 1426.0 1384.8 1428.0 1385.6 C1430.0 1386.4 1432.0 1387.3 1434.0 1388.2 C1436.0 1389.1 1438.0 1390.1 1440.0 1391.1 C1442.0 1392.0 1444.0 1393.1 1446.0 1394.1 C1448.0 1395.1 1450.0 1396.2 1452.0 1397.3 C1454.0 1398.4 1456.0 1399.5 1458.0 1400.6 C1460.0 1401.7 1462.0 1402.9 1464.0 1404.0 C1466.0 1405.2 1468.0 1406.3 1470.0 1407.5 C1472.0 1408.6 1474.0 1409.8 1476.0 1410.9 C1478.0 1412.1 1480.0 1413.2 1482.0 1414.4 C1484.0 1415.5 1486.0 1416.6 1488.0 1417.7 C1490.0 1418.8 1492.0 1419.9 1494.0 1421.0 C1496.0 1422.0 1498.0 1423.1 1500.0 1424.1 C1502.0 1425.1 1504.0 1426.0 1506.0 1427.0 C1508.0 1427.9 1510.0 1428.8 1512.0 1429.7 C1514.0 1430.5 1516.0 1431.4 1518.0 1432.1 C1520.0 1432.9 1522.0 1433.6 1524.0 1434.2 C1526.0 1434.8 1528.0 1435.3 1530.0 1435.7 C1532.0 1436.0 1534.0 1436.3 1536.0 1436.3 C1538.0 1436.4 1540.0 1436.3 1542.0 1435.9 C1544.0 1435.6 1546.0 1435.1 1548.0 1434.3 C1550.0 1433.6 1552.0 1432.6 1554.0 1431.3 C1556.0 1430.0 1558.0 1428.4 1560.0 1426.6 C1562.0 1424.8 1564.0 1422.6 1566.0 1420.3 C1568.0 1418.0 1570.0 1415.4 1572.0 1412.8 C1574.0 1410.2 1576.0 1407.4 1578.0 1404.7 C1580.0 1401.9 1582.0 1399.0 1584.0 1396.3 C1586.0 1393.5 1588.0 1390.7 1590.0 1388.0 C1592.0 1385.4 1594.0 1382.8 1596.0 1380.5 C1598.0 1378.2 1600.0 1376.0 1602.0 1374.2 C1604.0 1372.4 1606.0 1370.9 1608.0 1369.8 C1610.0 1368.8 1612.8 1368.3 1614.0 1368.0 C1615.2 1367.7 1614.8 1368.0 1615.0 1368.0" fill="none" stroke="#fd5518" stroke-width="5.5" stroke-linecap="round"/></g><circle cx="634.8" cy="1419.6" r="4.2" fill="#fd5518" stroke="#fff" stroke-width="2.2"/><circle cx="786.7" cy="1365.9" r="4.2" fill="#fd5518" stroke="#fff" stroke-width="2.2"/><circle cx="936.2" cy="1368.9" r="4.2" fill="#fd5518" stroke="#fff" stroke-width="2.2"/><circle cx="1086.7" cy="1403.8" r="4.2" fill="#fd5518" stroke="#fff" stroke-width="2.2"/><circle cx="1227.5" cy="1419.4" r="4.2" fill="#fd5518" stroke="#fff" stroke-width="2.2"/><circle cx="1384.7" cy="1376.1" r="4.2" fill="#fd5518" stroke="#fff" stroke-width="2.2"/><circle cx="1533.9" cy="1436.4" r="4.2" fill="#fd5518" stroke="#fff" stroke-width="2.2"/></svg>
<svg style="left:0;top:0" width="2880" height="2130"><defs><clipPath id="cl4"><rect x="1749" y="1300" width="1051" height="265.79999999999995"/></clipPath></defs><g clip-path="url(#cl4)"><path d="M1749.0 1436.6 C1750.0 1437.3 1753.0 1439.5 1755.0 1440.9 C1757.0 1442.2 1759.0 1443.4 1761.0 1444.6 C1763.0 1445.7 1765.0 1446.8 1767.0 1447.8 C1769.0 1448.8 1771.0 1449.8 1773.0 1450.6 C1775.0 1451.5 1777.0 1452.2 1779.0 1452.9 C1781.0 1453.6 1783.0 1454.2 1785.0 1454.8 C1787.0 1455.3 1789.0 1455.8 1791.0 1456.2 C1793.0 1456.6 1795.0 1456.9 1797.0 1457.2 C1799.0 1457.4 1801.0 1457.6 1803.0 1457.7 C1805.0 1457.8 1807.0 1457.9 1809.0 1457.8 C1811.0 1457.8 1813.0 1457.7 1815.0 1457.5 C1817.0 1457.3 1819.0 1457.1 1821.0 1456.8 C1823.0 1456.5 1825.0 1456.1 1827.0 1455.7 C1829.0 1455.2 1831.0 1454.7 1833.0 1454.1 C1835.0 1453.6 1837.0 1452.9 1839.0 1452.2 C1841.0 1451.5 1843.0 1450.7 1845.0 1449.9 C1847.0 1449.1 1849.0 1448.2 1851.0 1447.2 C1853.0 1446.3 1855.0 1445.2 1857.0 1444.2 C1859.0 1443.1 1861.0 1441.9 1863.0 1440.7 C1865.0 1439.5 1867.0 1438.3 1869.0 1437.0 C1871.0 1435.6 1873.0 1434.3 1875.0 1432.8 C1877.0 1431.4 1879.0 1429.9 1881.0 1428.4 C1883.0 1426.8 1885.0 1425.2 1887.0 1423.6 C1889.0 1422.0 1891.0 1420.3 1893.0 1418.6 C1895.0 1416.9 1897.0 1415.2 1899.0 1413.5 C1901.0 1411.7 1903.0 1410.0 1905.0 1408.2 C1907.0 1406.4 1909.0 1404.7 1911.0 1402.9 C1913.0 1401.1 1915.0 1399.4 1917.0 1397.6 C1919.0 1395.9 1921.0 1394.1 1923.0 1392.4 C1925.0 1390.7 1927.0 1389.0 1929.0 1387.4 C1931.0 1385.7 1933.0 1384.1 1935.0 1382.5 C1937.0 1381.0 1939.0 1379.4 1941.0 1378.0 C1943.0 1376.5 1945.0 1375.1 1947.0 1373.7 C1949.0 1372.4 1951.0 1371.1 1953.0 1369.8 C1955.0 1368.6 1957.0 1367.4 1959.0 1366.3 C1961.0 1365.2 1963.0 1364.1 1965.0 1363.1 C1967.0 1362.1 1969.0 1361.1 1971.0 1360.2 C1973.0 1359.3 1975.0 1358.4 1977.0 1357.6 C1979.0 1356.8 1981.0 1356.0 1983.0 1355.2 C1985.0 1354.5 1987.0 1353.8 1989.0 1353.2 C1991.0 1352.5 1993.0 1351.9 1995.0 1351.4 C1997.0 1350.8 1999.0 1350.3 2001.0 1349.8 C2003.0 1349.3 2005.0 1348.9 2007.0 1348.5 C2009.0 1348.0 2011.0 1347.7 2013.0 1347.3 C2015.0 1347.0 2017.0 1346.7 2019.0 1346.4 C2021.0 1346.1 2023.0 1345.8 2025.0 1345.6 C2027.0 1345.4 2029.0 1345.2 2031.0 1345.0 C2033.0 1344.9 2035.0 1344.7 2037.0 1344.6 C2039.0 1344.5 2041.0 1344.4 2043.0 1344.4 C2045.0 1344.3 2047.0 1344.3 2049.0 1344.3 C2051.0 1344.3 2053.0 1344.3 2055.0 1344.4 C2057.0 1344.4 2059.0 1344.5 2061.0 1344.6 C2063.0 1344.7 2065.0 1344.8 2067.0 1345.0 C2069.0 1345.1 2071.0 1345.3 2073.0 1345.5 C2075.0 1345.7 2077.0 1345.9 2079.0 1346.1 C2081.0 1346.3 2083.0 1346.6 2085.0 1346.8 C2087.0 1347.1 2089.0 1347.4 2091.0 1347.7 C2093.0 1348.0 2095.0 1348.3 2097.0 1348.7 C2099.0 1349.0 2101.0 1349.4 2103.0 1349.7 C2105.0 1350.1 2107.0 1350.5 2109.0 1350.9 C2111.0 1351.3 2113.0 1351.7 2115.0 1352.1 C2117.0 1352.6 2119.0 1353.0 2121.0 1353.4 C2123.0 1353.9 2125.0 1354.4 2127.0 1354.8 C2129.0 1355.3 2131.0 1355.8 2133.0 1356.3 C2135.0 1356.8 2137.0 1357.3 2139.0 1357.8 C2141.0 1358.4 2143.0 1358.9 2145.0 1359.4 C2147.0 1359.9 2149.0 1360.5 2151.0 1361.0 C2153.0 1361.6 2155.0 1362.1 2157.0 1362.7 C2159.0 1363.3 2161.0 1363.8 2163.0 1364.4 C2165.0 1365.0 2167.0 1365.5 2169.0 1366.1 C2171.0 1366.7 2173.0 1367.3 2175.0 1367.9 C2177.0 1368.5 2179.0 1369.0 2181.0 1369.6 C2183.0 1370.2 2185.0 1370.8 2187.0 1371.4 C2189.0 1372.0 2191.0 1372.6 2193.0 1373.2 C2195.0 1373.7 2197.0 1374.3 2199.0 1374.9 C2201.0 1375.5 2203.0 1376.1 2205.0 1376.7 C2207.0 1377.2 2209.0 1377.8 2211.0 1378.4 C2213.0 1379.0 2215.0 1379.5 2217.0 1380.1 C2219.0 1380.6 2221.0 1381.2 2223.0 1381.8 C2225.0 1382.3 2227.0 1382.8 2229.0 1383.4 C2231.0 1383.9 2233.0 1384.4 2235.0 1385.0 C2237.0 1385.5 2239.0 1386.0 2241.0 1386.5 C2243.0 1387.0 2245.0 1387.5 2247.0 1387.9 C2249.0 1388.4 2251.0 1388.9 2253.0 1389.3 C2255.0 1389.8 2257.0 1390.2 2259.0 1390.7 C2261.0 1391.1 2263.0 1391.5 2265.0 1391.9 C2267.0 1392.3 2269.0 1392.7 2271.0 1393.1 C2273.0 1393.4 2275.0 1393.8 2277.0 1394.1 C2279.0 1394.5 2281.0 1394.8 2283.0 1395.1 C2285.0 1395.4 2287.0 1395.7 2289.0 1396.0 C2291.0 1396.3 2293.0 1396.6 2295.0 1396.9 C2297.0 1397.2 2299.0 1397.4 2301.0 1397.7 C2303.0 1397.9 2305.0 1398.2 2307.0 1398.4 C2309.0 1398.7 2311.0 1398.9 2313.0 1399.1 C2315.0 1399.4 2317.0 1399.6 2319.0 1399.8 C2321.0 1400.1 2323.0 1400.3 2325.0 1400.5 C2327.0 1400.8 2329.0 1401.0 2331.0 1401.2 C2333.0 1401.4 2335.0 1401.7 2337.0 1401.9 C2339.0 1402.1 2341.0 1402.4 2343.0 1402.6 C2345.0 1402.8 2347.0 1403.1 2349.0 1403.3 C2351.0 1403.5 2353.0 1403.8 2355.0 1404.0 C2357.0 1404.2 2359.0 1404.4 2361.0 1404.6 C2363.0 1404.9 2365.0 1405.1 2367.0 1405.2 C2369.0 1405.4 2371.0 1405.6 2373.0 1405.8 C2375.0 1405.9 2377.0 1406.1 2379.0 1406.2 C2381.0 1406.3 2383.0 1406.4 2385.0 1406.5 C2387.0 1406.6 2389.0 1406.6 2391.0 1406.7 C2393.0 1406.7 2395.0 1406.7 2397.0 1406.7 C2399.0 1406.7 2401.0 1406.6 2403.0 1406.5 C2405.0 1406.5 2407.0 1406.4 2409.0 1406.2 C2411.0 1406.1 2413.0 1405.9 2415.0 1405.6 C2417.0 1405.4 2419.0 1405.2 2421.0 1404.9 C2423.0 1404.6 2425.0 1404.3 2427.0 1403.9 C2429.0 1403.6 2431.0 1403.2 2433.0 1402.8 C2435.0 1402.4 2437.0 1401.9 2439.0 1401.5 C2441.0 1401.0 2443.0 1400.5 2445.0 1400.0 C2447.0 1399.5 2449.0 1399.0 2451.0 1398.4 C2453.0 1397.9 2455.0 1397.3 2457.0 1396.7 C2459.0 1396.1 2461.0 1395.5 2463.0 1394.9 C2465.0 1394.3 2467.0 1393.7 2469.0 1393.0 C2471.0 1392.4 2473.0 1391.8 2475.0 1391.1 C2477.0 1390.5 2479.0 1389.8 2481.0 1389.1 C2483.0 1388.5 2485.0 1387.8 2487.0 1387.1 C2489.0 1386.5 2491.0 1385.8 2493.0 1385.1 C2495.0 1384.5 2497.0 1383.8 2499.0 1383.2 C2501.0 1382.5 2503.0 1381.9 2505.0 1381.2 C2507.0 1380.6 2509.0 1380.0 2511.0 1379.4 C2513.0 1378.7 2515.0 1378.1 2517.0 1377.6 C2519.0 1377.0 2521.0 1376.4 2523.0 1375.9 C2525.0 1375.4 2527.0 1374.8 2529.0 1374.4 C2531.0 1373.9 2533.0 1373.4 2535.0 1373.0 C2537.0 1372.5 2539.0 1372.1 2541.0 1371.7 C2543.0 1371.4 2545.0 1371.0 2547.0 1370.7 C2549.0 1370.4 2551.0 1370.1 2553.0 1369.9 C2555.0 1369.6 2557.0 1369.4 2559.0 1369.2 C2561.0 1368.9 2563.0 1368.7 2565.0 1368.6 C2567.0 1368.4 2569.0 1368.2 2571.0 1368.0 C2573.0 1367.9 2575.0 1367.7 2577.0 1367.6 C2579.0 1367.4 2581.0 1367.3 2583.0 1367.1 C2585.0 1366.9 2587.0 1366.8 2589.0 1366.6 C2591.0 1366.5 2593.0 1366.3 2595.0 1366.1 C2597.0 1365.9 2599.0 1365.7 2601.0 1365.5 C2603.0 1365.3 2605.0 1365.1 2607.0 1364.8 C2609.0 1364.6 2611.0 1364.3 2613.0 1364.0 C2615.0 1363.7 2617.0 1363.4 2619.0 1363.0 C2621.0 1362.7 2623.0 1362.3 2625.0 1361.9 C2627.0 1361.6 2629.0 1361.2 2631.0 1360.8 C2633.0 1360.4 2635.0 1359.9 2637.0 1359.5 C2639.0 1359.1 2641.0 1358.7 2643.0 1358.2 C2645.0 1357.8 2647.0 1357.3 2649.0 1356.9 C2651.0 1356.5 2653.0 1356.0 2655.0 1355.6 C2657.0 1355.1 2659.0 1354.7 2661.0 1354.3 C2663.0 1353.9 2665.0 1353.4 2667.0 1353.0 C2669.0 1352.6 2671.0 1352.2 2673.0 1351.8 C2675.0 1351.5 2677.0 1351.1 2679.0 1350.7 C2681.0 1350.4 2683.0 1350.1 2685.0 1349.8 C2687.0 1349.5 2689.0 1349.2 2691.0 1348.9 C2693.0 1348.6 2695.0 1348.4 2697.0 1348.2 C2699.0 1347.9 2701.0 1347.7 2703.0 1347.5 C2705.0 1347.3 2707.0 1347.2 2709.0 1347.0 C2711.0 1346.9 2713.0 1346.7 2715.0 1346.6 C2717.0 1346.5 2719.0 1346.4 2721.0 1346.4 C2723.0 1346.3 2725.0 1346.3 2727.0 1346.3 C2729.0 1346.2 2731.0 1346.2 2733.0 1346.3 C2735.0 1346.3 2737.0 1346.3 2739.0 1346.4 C2741.0 1346.5 2743.0 1346.6 2745.0 1346.7 C2747.0 1346.8 2749.0 1347.0 2751.0 1347.1 C2753.0 1347.3 2755.0 1347.5 2757.0 1347.7 C2759.0 1347.9 2761.0 1348.1 2763.0 1348.4 C2765.0 1348.7 2767.0 1349.0 2769.0 1349.3 C2771.0 1349.6 2773.0 1349.9 2775.0 1350.3 C2777.0 1350.6 2779.0 1351.0 2781.0 1351.4 C2783.0 1351.9 2785.0 1352.3 2787.0 1352.8 C2789.0 1353.2 2791.0 1353.7 2793.0 1354.2 C2795.0 1354.7 2797.8 1355.5 2799.0 1355.9 C2800.2 1356.2 2799.8 1356.1 2800.0 1356.2 L2800 1565.8 L1749 1565.8 Z" fill="#f8f4f1"/><path d="M1749.0 1436.6 C1750.0 1437.3 1753.0 1439.5 1755.0 1440.9 C1757.0 1442.2 1759.0 1443.4 1761.0 1444.6 C1763.0 1445.7 1765.0 1446.8 1767.0 1447.8 C1769.0 1448.8 1771.0 1449.8 1773.0 1450.6 C1775.0 1451.5 1777.0 1452.2 1779.0 1452.9 C1781.0 1453.6 1783.0 1454.2 1785.0 1454.8 C1787.0 1455.3 1789.0 1455.8 1791.0 1456.2 C1793.0 1456.6 1795.0 1456.9 1797.0 1457.2 C1799.0 1457.4 1801.0 1457.6 1803.0 1457.7 C1805.0 1457.8 1807.0 1457.9 1809.0 1457.8 C1811.0 1457.8 1813.0 1457.7 1815.0 1457.5 C1817.0 1457.3 1819.0 1457.1 1821.0 1456.8 C1823.0 1456.5 1825.0 1456.1 1827.0 1455.7 C1829.0 1455.2 1831.0 1454.7 1833.0 1454.1 C1835.0 1453.6 1837.0 1452.9 1839.0 1452.2 C1841.0 1451.5 1843.0 1450.7 1845.0 1449.9 C1847.0 1449.1 1849.0 1448.2 1851.0 1447.2 C1853.0 1446.3 1855.0 1445.2 1857.0 1444.2 C1859.0 1443.1 1861.0 1441.9 1863.0 1440.7 C1865.0 1439.5 1867.0 1438.3 1869.0 1437.0 C1871.0 1435.6 1873.0 1434.3 1875.0 1432.8 C1877.0 1431.4 1879.0 1429.9 1881.0 1428.4 C1883.0 1426.8 1885.0 1425.2 1887.0 1423.6 C1889.0 1422.0 1891.0 1420.3 1893.0 1418.6 C1895.0 1416.9 1897.0 1415.2 1899.0 1413.5 C1901.0 1411.7 1903.0 1410.0 1905.0 1408.2 C1907.0 1406.4 1909.0 1404.7 1911.0 1402.9 C1913.0 1401.1 1915.0 1399.4 1917.0 1397.6 C1919.0 1395.9 1921.0 1394.1 1923.0 1392.4 C1925.0 1390.7 1927.0 1389.0 1929.0 1387.4 C1931.0 1385.7 1933.0 1384.1 1935.0 1382.5 C1937.0 1381.0 1939.0 1379.4 1941.0 1378.0 C1943.0 1376.5 1945.0 1375.1 1947.0 1373.7 C1949.0 1372.4 1951.0 1371.1 1953.0 1369.8 C1955.0 1368.6 1957.0 1367.4 1959.0 1366.3 C1961.0 1365.2 1963.0 1364.1 1965.0 1363.1 C1967.0 1362.1 1969.0 1361.1 1971.0 1360.2 C1973.0 1359.3 1975.0 1358.4 1977.0 1357.6 C1979.0 1356.8 1981.0 1356.0 1983.0 1355.2 C1985.0 1354.5 1987.0 1353.8 1989.0 1353.2 C1991.0 1352.5 1993.0 1351.9 1995.0 1351.4 C1997.0 1350.8 1999.0 1350.3 2001.0 1349.8 C2003.0 1349.3 2005.0 1348.9 2007.0 1348.5 C2009.0 1348.0 2011.0 1347.7 2013.0 1347.3 C2015.0 1347.0 2017.0 1346.7 2019.0 1346.4 C2021.0 1346.1 2023.0 1345.8 2025.0 1345.6 C2027.0 1345.4 2029.0 1345.2 2031.0 1345.0 C2033.0 1344.9 2035.0 1344.7 2037.0 1344.6 C2039.0 1344.5 2041.0 1344.4 2043.0 1344.4 C2045.0 1344.3 2047.0 1344.3 2049.0 1344.3 C2051.0 1344.3 2053.0 1344.3 2055.0 1344.4 C2057.0 1344.4 2059.0 1344.5 2061.0 1344.6 C2063.0 1344.7 2065.0 1344.8 2067.0 1345.0 C2069.0 1345.1 2071.0 1345.3 2073.0 1345.5 C2075.0 1345.7 2077.0 1345.9 2079.0 1346.1 C2081.0 1346.3 2083.0 1346.6 2085.0 1346.8 C2087.0 1347.1 2089.0 1347.4 2091.0 1347.7 C2093.0 1348.0 2095.0 1348.3 2097.0 1348.7 C2099.0 1349.0 2101.0 1349.4 2103.0 1349.7 C2105.0 1350.1 2107.0 1350.5 2109.0 1350.9 C2111.0 1351.3 2113.0 1351.7 2115.0 1352.1 C2117.0 1352.6 2119.0 1353.0 2121.0 1353.4 C2123.0 1353.9 2125.0 1354.4 2127.0 1354.8 C2129.0 1355.3 2131.0 1355.8 2133.0 1356.3 C2135.0 1356.8 2137.0 1357.3 2139.0 1357.8 C2141.0 1358.4 2143.0 1358.9 2145.0 1359.4 C2147.0 1359.9 2149.0 1360.5 2151.0 1361.0 C2153.0 1361.6 2155.0 1362.1 2157.0 1362.7 C2159.0 1363.3 2161.0 1363.8 2163.0 1364.4 C2165.0 1365.0 2167.0 1365.5 2169.0 1366.1 C2171.0 1366.7 2173.0 1367.3 2175.0 1367.9 C2177.0 1368.5 2179.0 1369.0 2181.0 1369.6 C2183.0 1370.2 2185.0 1370.8 2187.0 1371.4 C2189.0 1372.0 2191.0 1372.6 2193.0 1373.2 C2195.0 1373.7 2197.0 1374.3 2199.0 1374.9 C2201.0 1375.5 2203.0 1376.1 2205.0 1376.7 C2207.0 1377.2 2209.0 1377.8 2211.0 1378.4 C2213.0 1379.0 2215.0 1379.5 2217.0 1380.1 C2219.0 1380.6 2221.0 1381.2 2223.0 1381.8 C2225.0 1382.3 2227.0 1382.8 2229.0 1383.4 C2231.0 1383.9 2233.0 1384.4 2235.0 1385.0 C2237.0 1385.5 2239.0 1386.0 2241.0 1386.5 C2243.0 1387.0 2245.0 1387.5 2247.0 1387.9 C2249.0 1388.4 2251.0 1388.9 2253.0 1389.3 C2255.0 1389.8 2257.0 1390.2 2259.0 1390.7 C2261.0 1391.1 2263.0 1391.5 2265.0 1391.9 C2267.0 1392.3 2269.0 1392.7 2271.0 1393.1 C2273.0 1393.4 2275.0 1393.8 2277.0 1394.1 C2279.0 1394.5 2281.0 1394.8 2283.0 1395.1 C2285.0 1395.4 2287.0 1395.7 2289.0 1396.0 C2291.0 1396.3 2293.0 1396.6 2295.0 1396.9 C2297.0 1397.2 2299.0 1397.4 2301.0 1397.7 C2303.0 1397.9 2305.0 1398.2 2307.0 1398.4 C2309.0 1398.7 2311.0 1398.9 2313.0 1399.1 C2315.0 1399.4 2317.0 1399.6 2319.0 1399.8 C2321.0 1400.1 2323.0 1400.3 2325.0 1400.5 C2327.0 1400.8 2329.0 1401.0 2331.0 1401.2 C2333.0 1401.4 2335.0 1401.7 2337.0 1401.9 C2339.0 1402.1 2341.0 1402.4 2343.0 1402.6 C2345.0 1402.8 2347.0 1403.1 2349.0 1403.3 C2351.0 1403.5 2353.0 1403.8 2355.0 1404.0 C2357.0 1404.2 2359.0 1404.4 2361.0 1404.6 C2363.0 1404.9 2365.0 1405.1 2367.0 1405.2 C2369.0 1405.4 2371.0 1405.6 2373.0 1405.8 C2375.0 1405.9 2377.0 1406.1 2379.0 1406.2 C2381.0 1406.3 2383.0 1406.4 2385.0 1406.5 C2387.0 1406.6 2389.0 1406.6 2391.0 1406.7 C2393.0 1406.7 2395.0 1406.7 2397.0 1406.7 C2399.0 1406.7 2401.0 1406.6 2403.0 1406.5 C2405.0 1406.5 2407.0 1406.4 2409.0 1406.2 C2411.0 1406.1 2413.0 1405.9 2415.0 1405.6 C2417.0 1405.4 2419.0 1405.2 2421.0 1404.9 C2423.0 1404.6 2425.0 1404.3 2427.0 1403.9 C2429.0 1403.6 2431.0 1403.2 2433.0 1402.8 C2435.0 1402.4 2437.0 1401.9 2439.0 1401.5 C2441.0 1401.0 2443.0 1400.5 2445.0 1400.0 C2447.0 1399.5 2449.0 1399.0 2451.0 1398.4 C2453.0 1397.9 2455.0 1397.3 2457.0 1396.7 C2459.0 1396.1 2461.0 1395.5 2463.0 1394.9 C2465.0 1394.3 2467.0 1393.7 2469.0 1393.0 C2471.0 1392.4 2473.0 1391.8 2475.0 1391.1 C2477.0 1390.5 2479.0 1389.8 2481.0 1389.1 C2483.0 1388.5 2485.0 1387.8 2487.0 1387.1 C2489.0 1386.5 2491.0 1385.8 2493.0 1385.1 C2495.0 1384.5 2497.0 1383.8 2499.0 1383.2 C2501.0 1382.5 2503.0 1381.9 2505.0 1381.2 C2507.0 1380.6 2509.0 1380.0 2511.0 1379.4 C2513.0 1378.7 2515.0 1378.1 2517.0 1377.6 C2519.0 1377.0 2521.0 1376.4 2523.0 1375.9 C2525.0 1375.4 2527.0 1374.8 2529.0 1374.4 C2531.0 1373.9 2533.0 1373.4 2535.0 1373.0 C2537.0 1372.5 2539.0 1372.1 2541.0 1371.7 C2543.0 1371.4 2545.0 1371.0 2547.0 1370.7 C2549.0 1370.4 2551.0 1370.1 2553.0 1369.9 C2555.0 1369.6 2557.0 1369.4 2559.0 1369.2 C2561.0 1368.9 2563.0 1368.7 2565.0 1368.6 C2567.0 1368.4 2569.0 1368.2 2571.0 1368.0 C2573.0 1367.9 2575.0 1367.7 2577.0 1367.6 C2579.0 1367.4 2581.0 1367.3 2583.0 1367.1 C2585.0 1366.9 2587.0 1366.8 2589.0 1366.6 C2591.0 1366.5 2593.0 1366.3 2595.0 1366.1 C2597.0 1365.9 2599.0 1365.7 2601.0 1365.5 C2603.0 1365.3 2605.0 1365.1 2607.0 1364.8 C2609.0 1364.6 2611.0 1364.3 2613.0 1364.0 C2615.0 1363.7 2617.0 1363.4 2619.0 1363.0 C2621.0 1362.7 2623.0 1362.3 2625.0 1361.9 C2627.0 1361.6 2629.0 1361.2 2631.0 1360.8 C2633.0 1360.4 2635.0 1359.9 2637.0 1359.5 C2639.0 1359.1 2641.0 1358.7 2643.0 1358.2 C2645.0 1357.8 2647.0 1357.3 2649.0 1356.9 C2651.0 1356.5 2653.0 1356.0 2655.0 1355.6 C2657.0 1355.1 2659.0 1354.7 2661.0 1354.3 C2663.0 1353.9 2665.0 1353.4 2667.0 1353.0 C2669.0 1352.6 2671.0 1352.2 2673.0 1351.8 C2675.0 1351.5 2677.0 1351.1 2679.0 1350.7 C2681.0 1350.4 2683.0 1350.1 2685.0 1349.8 C2687.0 1349.5 2689.0 1349.2 2691.0 1348.9 C2693.0 1348.6 2695.0 1348.4 2697.0 1348.2 C2699.0 1347.9 2701.0 1347.7 2703.0 1347.5 C2705.0 1347.3 2707.0 1347.2 2709.0 1347.0 C2711.0 1346.9 2713.0 1346.7 2715.0 1346.6 C2717.0 1346.5 2719.0 1346.4 2721.0 1346.4 C2723.0 1346.3 2725.0 1346.3 2727.0 1346.3 C2729.0 1346.2 2731.0 1346.2 2733.0 1346.3 C2735.0 1346.3 2737.0 1346.3 2739.0 1346.4 C2741.0 1346.5 2743.0 1346.6 2745.0 1346.7 C2747.0 1346.8 2749.0 1347.0 2751.0 1347.1 C2753.0 1347.3 2755.0 1347.5 2757.0 1347.7 C2759.0 1347.9 2761.0 1348.1 2763.0 1348.4 C2765.0 1348.7 2767.0 1349.0 2769.0 1349.3 C2771.0 1349.6 2773.0 1349.9 2775.0 1350.3 C2777.0 1350.6 2779.0 1351.0 2781.0 1351.4 C2783.0 1351.9 2785.0 1352.3 2787.0 1352.8 C2789.0 1353.2 2791.0 1353.7 2793.0 1354.2 C2795.0 1354.7 2797.8 1355.5 2799.0 1355.9 C2800.2 1356.2 2799.8 1356.1 2800.0 1356.2" fill="none" stroke="#fd5518" stroke-width="5.5" stroke-linecap="round"/></g><circle cx="1820" cy="1457.8" r="4.2" fill="#fd5518" stroke="#fff" stroke-width="2.2"/><circle cx="1972.2" cy="1357.8" r="4.2" fill="#fd5518" stroke="#fff" stroke-width="2.2"/><circle cx="2121.3" cy="1353.7" r="4.2" fill="#fd5518" stroke="#fff" stroke-width="2.2"/><circle cx="2270.6" cy="1391.8" r="4.2" fill="#fd5518" stroke="#fff" stroke-width="2.2"/><circle cx="2412.6" cy="1405.9" r="4.2" fill="#fd5518" stroke="#fff" stroke-width="2.2"/><circle cx="2569.6" cy="1367.7" r="4.2" fill="#fd5518" stroke="#fff" stroke-width="2.2"/><circle cx="2719.1" cy="1345.6" r="4.2" fill="#fd5518" stroke="#fff" stroke-width="2.2"/></svg>
<svg style="left:0;top:0" width="2880" height="2130"><circle cx="682.3" cy="653.8" r="73.75" fill="none" stroke="#f3ebe8" stroke-width="70.5"/><circle cx="682.3" cy="653.8" r="98.3" fill="none" stroke="#fff" stroke-width="1.6"/><circle cx="682.3" cy="653.8" r="67.4" fill="none" stroke="#fff" stroke-width="1.6"/><circle cx="682.3" cy="653.8" r="104" fill="none" stroke="#fa5116" stroke-width="10" stroke-linecap="round" stroke-dasharray="568.14 653.45" transform="rotate(-90 682.3 653.8)"/><circle cx="682.3" cy="653.8" r="83" fill="none" stroke="#ffd96c" stroke-width="29" stroke-linecap="round" stroke-dasharray="373.74 521.50" transform="rotate(-90 682.3 653.8)"/><circle cx="682.3" cy="653.8" r="52.8" fill="none" stroke="#0ba279" stroke-width="28.4" stroke-linecap="round" stroke-dasharray="289.36 331.75" transform="rotate(-90 682.3 653.8)"/></svg>
<div class="a" style="left:533px;top:801px;width:297px;height:26px;border-radius:13px;background:#f3ebe8"></div>
<div class="a" style="left:533px;top:801px;width:178px;height:22px;border-radius:13px;background:#c6e2fd;border:2px solid #b2d6fc"></div>
<svg style="left:0;top:0" width="2880" height="2130"><circle cx="539.9" cy="872.0" r="6.6" fill="#7f6cf8"/><circle cx="556.7" cy="872.0" r="6.6" fill="#7f6cf8"/><circle cx="573.6" cy="872.0" r="6.6" fill="#7f6cf8"/><circle cx="590.4" cy="872.0" r="6.6" fill="#7f6cf8"/><circle cx="607.2" cy="872.0" r="6.6" fill="#7f6cf8"/><circle cx="624.0" cy="872.0" r="6.6" fill="#7f6cf8"/><circle cx="640.9" cy="872.0" r="6.6" fill="#7f6cf8"/><circle cx="657.7" cy="872.0" r="6.6" fill="#7f6cf8"/><circle cx="674.5" cy="872.0" r="6.6" fill="#7f6cf8"/><circle cx="691.4" cy="872.0" r="6.6" fill="#7f6cf8"/><circle cx="708.2" cy="872.0" r="6.6" fill="#7f6cf8"/><circle cx="725.0" cy="872.0" r="6.6" fill="#7f6cf8"/><circle cx="741.9" cy="872.0" r="6.6" fill="#7f6cf8"/><circle cx="758.7" cy="872.0" r="6.6" fill="#7f6cf8"/><circle cx="775.5" cy="872.0" r="6.6" fill="#7f6cf8"/><circle cx="792.3" cy="872.0" r="6.6" fill="#7f6cf8"/><circle cx="809.2" cy="872.0" r="6.6" fill="#7f6cf8"/><circle cx="539.9" cy="888.9" r="6.6" fill="#7f6cf8"/><circle cx="556.7" cy="888.9" r="6.6" fill="#7f6cf8"/><circle cx="573.6" cy="888.9" r="6.6" fill="#7f6cf8"/><circle cx="590.4" cy="888.9" r="6.6" fill="#7f6cf8"/><circle cx="607.2" cy="888.9" r="6.6" fill="#7f6cf8"/><circle cx="624.0" cy="888.9" r="6.6" fill="#7f6cf8"/><circle cx="640.9" cy="888.9" r="6.6" fill="#7f6cf8"/><circle cx="657.7" cy="888.9" r="6.6" fill="#7f6cf8"/><circle cx="674.5" cy="888.9" r="6.6" fill="#7f6cf8"/><circle cx="691.4" cy="888.9" r="6.6" fill="#7f6cf8"/><circle cx="708.2" cy="888.9" r="6.6" fill="#7f6cf8"/><circle cx="725.0" cy="888.9" r="6.6" fill="#7f6cf8"/><circle cx="741.9" cy="888.9" r="6.6" fill="#7f6cf8"/><circle cx="758.7" cy="888.9" r="6.6" fill="#7f6cf8"/><circle cx="775.5" cy="888.9" r="6.6" fill="#7f6cf8"/><circle cx="792.3" cy="888.9" r="6.6" fill="#7f6cf8"/><circle cx="809.2" cy="888.9" r="6.6" fill="#7f6cf8"/><circle cx="539.9" cy="905.7" r="6.6" fill="#7f6cf8"/><circle cx="556.7" cy="905.7" r="6.6" fill="#7f6cf8"/><circle cx="573.6" cy="905.7" r="6.6" fill="#7f6cf8"/><circle cx="590.4" cy="905.7" r="6.6" fill="#7f6cf8"/><circle cx="607.2" cy="905.7" r="6.6" fill="#7f6cf8"/><circle cx="624.0" cy="905.7" r="6.6" fill="#7f6cf8"/><circle cx="640.9" cy="905.7" r="6.6" fill="#7f6cf8"/><circle cx="657.7" cy="905.7" r="6.6" fill="#7f6cf8"/><circle cx="674.5" cy="905.7" r="6.6" fill="#7f6cf8"/><circle cx="691.4" cy="905.7" r="6.6" fill="#7f6cf8"/><circle cx="708.2" cy="905.7" r="6.6" fill="#7f6cf8"/><circle cx="725.0" cy="905.7" r="6.6" fill="#7f6cf8"/><circle cx="741.9" cy="905.7" r="6.6" fill="#7f6cf8"/><circle cx="758.7" cy="905.7" r="6.6" fill="#7f6cf8"/><circle cx="775.5" cy="905.7" r="6.6" fill="#7f6cf8"/><circle cx="792.3" cy="905.7" r="6.6" fill="#7f6cf8"/><circle cx="809.2" cy="905.7" r="6.6" fill="#7f6cf8"/><circle cx="539.9" cy="922.6" r="6.6" fill="#7f6cf8"/><circle cx="556.7" cy="922.6" r="6.6" fill="#7f6cf8"/><circle cx="573.6" cy="922.6" r="6.6" fill="#7f6cf8"/><circle cx="590.4" cy="922.6" r="6.6" fill="#7f6cf8"/><circle cx="607.2" cy="922.6" r="6.6" fill="#7f6cf8"/><circle cx="624.0" cy="922.6" r="6.6" fill="#7f6cf8"/><circle cx="640.9" cy="922.6" r="6.6" fill="#7f6cf8"/><circle cx="657.7" cy="922.6" r="6.6" fill="#7f6cf8"/><circle cx="674.5" cy="922.6" r="6.6" fill="#7f6cf8"/><circle cx="691.4" cy="922.6" r="6.6" fill="#7f6cf8"/><circle cx="708.2" cy="922.6" r="6.6" fill="#7f6cf8"/><circle cx="725.0" cy="922.6" r="6.6" fill="#7f6cf8"/><circle cx="741.9" cy="922.6" r="6.6" fill="#7f6cf8"/><circle cx="758.7" cy="922.6" r="6.6" fill="#7f6cf8"/><circle cx="775.5" cy="922.6" r="6.6" fill="#7f6cf8"/><circle cx="792.3" cy="922.6" r="6.6" fill="#7f6cf8"/><circle cx="809.2" cy="922.6" r="6.6" fill="#7f6cf8"/><circle cx="539.9" cy="939.5" r="6.6" fill="#7f6cf8"/><circle cx="556.7" cy="939.5" r="6.6" fill="#7f6cf8"/><circle cx="573.6" cy="939.5" r="6.6" fill="#7f6cf8"/><circle cx="590.4" cy="939.5" r="6.6" fill="#7f6cf8"/><circle cx="607.2" cy="939.5" r="6.6" fill="#7f6cf8"/><circle cx="624.0" cy="939.5" r="6.6" fill="#7f6cf8"/><circle cx="640.9" cy="939.5" r="6.6" fill="#7f6cf8"/><circle cx="657.7" cy="939.5" r="6.6" fill="#7f6cf8"/><circle cx="674.5" cy="939.5" r="6.6" fill="#7f6cf8"/><circle cx="691.4" cy="939.5" r="6.6" fill="#7f6cf8"/><circle cx="708.2" cy="939.5" r="6.6" fill="#7f6cf8"/><circle cx="725.0" cy="939.5" r="6.6" fill="#7f6cf8"/><circle cx="741.9" cy="939.5" r="6.6" fill="#7f6cf8"/><circle cx="758.7" cy="939.5" r="6.6" fill="#7f6cf8"/><circle cx="775.5" cy="939.5" r="6.6" fill="#7f6cf8"/><circle cx="792.3" cy="939.5" r="6.6" fill="#7f6cf8"/><circle cx="809.2" cy="939.5" r="6.6" fill="#7f6cf8"/><circle cx="539.9" cy="956.4" r="6.6" fill="#7f6cf8"/><circle cx="556.7" cy="956.4" r="6.6" fill="#7f6cf8"/><circle cx="573.6" cy="956.4" r="6.6" fill="#7f6cf8"/><circle cx="590.4" cy="956.4" r="6.6" fill="#7f6cf8"/><circle cx="607.2" cy="956.4" r="6.6" fill="#7f6cf8"/><circle cx="624.0" cy="956.4" r="6.6" fill="#7f6cf8"/><circle cx="640.9" cy="956.4" r="6.6" fill="#7f6cf8"/><circle cx="657.7" cy="956.4" r="6.6" fill="#7f6cf8"/><circle cx="674.5" cy="956.4" r="6.6" fill="#7f6cf8"/><circle cx="691.4" cy="956.4" r="6.6" fill="#7f6cf8"/><circle cx="708.2" cy="956.4" r="6.6" fill="#7f6cf8"/><circle cx="725.0" cy="956.4" r="6.6" fill="#7f6cf8"/><circle cx="741.9" cy="956.4" r="6.6" fill="#7f6cf8"/><circle cx="758.7" cy="956.4" r="6.6" fill="#7f6cf8"/><circle cx="775.5" cy="956.4" r="6.6" fill="#7f6cf8"/><circle cx="792.3" cy="956.4" r="6.6" fill="#7f6cf8"/><circle cx="809.2" cy="956.4" r="6.6" fill="#7f6cf8"/><circle cx="539.9" cy="973.2" r="6.6" fill="#7f6cf8"/><circle cx="556.7" cy="973.2" r="6.6" fill="#7f6cf8"/><circle cx="573.6" cy="973.2" r="6.6" fill="#7f6cf8"/><circle cx="590.4" cy="973.2" r="6.6" fill="#7f6cf8"/><circle cx="607.2" cy="973.2" r="6.6" fill="#7f6cf8"/><circle cx="624.0" cy="973.2" r="6.6" fill="#f3ebe8"/><circle cx="640.9" cy="973.2" r="6.6" fill="#f3ebe8"/><circle cx="657.7" cy="973.2" r="6.6" fill="#f3ebe8"/><circle cx="674.5" cy="973.2" r="6.6" fill="#f3ebe8"/><circle cx="691.4" cy="973.2" r="6.6" fill="#f3ebe8"/><circle cx="708.2" cy="973.2" r="6.6" fill="#f3ebe8"/><circle cx="725.0" cy="973.2" r="6.6" fill="#f3ebe8"/><circle cx="741.9" cy="973.2" r="6.6" fill="#f3ebe8"/><circle cx="758.7" cy="973.2" r="6.6" fill="#f3ebe8"/><circle cx="775.5" cy="973.2" r="6.6" fill="#f3ebe8"/><circle cx="792.3" cy="973.2" r="6.6" fill="#f3ebe8"/><circle cx="809.2" cy="973.2" r="6.6" fill="#f3ebe8"/></svg>
<div class="a" style="left:921px;top:600.2px;width:20px;height:20px;border-radius:4px;background:#fa5016"></div>
<div class="a" style="left:921px;top:676.2px;width:20px;height:20px;border-radius:4px;background:#ffd96b"></div>
<div class="a" style="left:921px;top:752.2px;width:20px;height:20px;border-radius:4px;background:#0e9f77"></div>
<div class="a" style="left:921px;top:828.2px;border:1.5px solid #b3d5f8;width:17px;height:17px;border-radius:4px;background:#c7e3fd"></div>
<div class="a" style="left:921px;top:904.2px;width:20px;height:20px;border-radius:4px;background:#7f6cf8"></div>
<svg style="left:1121.8px;top:586.9px" width="20.8" height="20.8" viewBox="0 0 24 24"><circle cx="12" cy="12" r="10" fill="none" stroke="#7a6562" stroke-width="1.95"/><path d="M9.1 9a3 3 0 0 1 5.8 1c0 2-3 2.6-3 4" fill="none" stroke="#7a6562" stroke-width="1.95" stroke-linecap="round"/><circle cx="11.9" cy="17.6" r="1.4625" fill="#7a6562"/></svg>
<svg style="left:1039.6px;top:662.9px" width="20.8" height="20.8" viewBox="0 0 24 24"><circle cx="12" cy="12" r="10" fill="none" stroke="#7a6562" stroke-width="1.95"/><path d="M9.1 9a3 3 0 0 1 5.8 1c0 2-3 2.6-3 4" fill="none" stroke="#7a6562" stroke-width="1.95" stroke-linecap="round"/><circle cx="11.9" cy="17.6" r="1.4625" fill="#7a6562"/></svg>
<svg style="left:1159.8px;top:738.9px" width="20.8" height="20.8" viewBox="0 0 24 24"><circle cx="12" cy="12" r="10" fill="none" stroke="#7a6562" stroke-width="1.95"/><path d="M9.1 9a3 3 0 0 1 5.8 1c0 2-3 2.6-3 4" fill="none" stroke="#7a6562" stroke-width="1.95" stroke-linecap="round"/><circle cx="11.9" cy="17.6" r="1.4625" fill="#7a6562"/></svg>
<svg style="left:1268.0px;top:814.9px" width="20.8" height="20.8" viewBox="0 0 24 24"><circle cx="12" cy="12" r="10" fill="none" stroke="#7a6562" stroke-width="1.95"/><path d="M9.1 9a3 3 0 0 1 5.8 1c0 2-3 2.6-3 4" fill="none" stroke="#7a6562" stroke-width="1.95" stroke-linecap="round"/><circle cx="11.9" cy="17.6" r="1.4625" fill="#7a6562"/></svg>
<svg style="left:1111.8px;top:890.9px" width="20.8" height="20.8" viewBox="0 0 24 24"><circle cx="12" cy="12" r="10" fill="none" stroke="#7a6562" stroke-width="1.95"/><path d="M9.1 9a3 3 0 0 1 5.8 1c0 2-3 2.6-3 4" fill="none" stroke="#7a6562" stroke-width="1.95" stroke-linecap="round"/><circle cx="11.9" cy="17.6" r="1.4625" fill="#7a6562"/></svg>
<svg style="left:0;top:0" width="300" height="160"><g fill="none" stroke="#f6efea" stroke-width="6" stroke-linecap="butt" stroke-linejoin="miter"><path d="M83 75.4V104"/><path d="M100.5 80.6V84.5Q100.5 90.4 94.5 90.4H86Q100.5 90.4 100.5 97.5V104"/><path d="M110.5 80V104"/><path d="M120.6 104V82.4H132.5Q138 82.4 138 88V104"/><path d="M164.5 82.4H151.5Q146.8 82.4 146.8 86.8Q146.8 90 150.8 90.8L157.5 92Q161.5 92.8 161.5 96.5Q161.5 101 156.5 101H143.8"/><path d="M173.2 75.4V95.5Q173.2 101 178.7 101H182.5"/><path d="M165 83.8H182.5"/><path d="M204.3 79.3V104"/><path d="M204.3 82.4H192Q186 82.4 186 89V95Q186 101 192 101H197Q204.3 101 204.3 94"/></g><circle cx="110.5" cy="75.6" r="3.6" fill="#f6efea"/></svg>
<svg style="left:470px;top:72px" width="36" height="32" viewBox="0 0 36 32"><g fill="none" stroke="#f6efea" stroke-width="2.6" stroke-linecap="round" stroke-linejoin="round"><path d="M5.5 16.5L18 5.5L30.5 16.5"/><path d="M8.5 14V24.5Q8.5 27 11 27H25Q27.5 27 27.5 24.5V14"/></g><path d="M15.3 27V22.2Q15.3 19.5 18 19.5Q20.7 19.5 20.7 22.2V27Z" fill="#f6efea"/></svg>
<svg style="left:785px;top:83px" width="15.5" height="10"><path d="M1.8 1.8L7.75 8.2L13.7 1.8" fill="none" stroke="#f6efea" stroke-width="2.6" stroke-linecap="round" stroke-linejoin="round"/></svg>
<svg style="left:1175.4px;top:83px" width="15.5" height="10"><path d="M1.8 1.8L7.75 8.2L13.7 1.8" fill="none" stroke="#f6efea" stroke-width="2.6" stroke-linecap="round" stroke-linejoin="round"/></svg>
<svg style="left:1350.7px;top:83px" width="15.5" height="10"><path d="M1.8 1.8L7.75 8.2L13.7 1.8" fill="none" stroke="#f6efea" stroke-width="2.6" stroke-linecap="round" stroke-linejoin="round"/></svg>
<svg style="left:2760px;top:82px" width="23" height="12.5"><path d="M1.7 1.7L11.5 10.8L21.3 1.7" fill="none" stroke="#f6efea" stroke-width="2.4" stroke-linecap="round" stroke-linejoin="round"/></svg>
<svg style="left:0;top:0" width="2880" height="200"><path d="M836.5999999999999 77.6L829.7 99.8" stroke="#a58f8a" stroke-width="2.4" stroke-linecap="round"/></svg>
<svg style="left:0;top:0" width="2880" height="200"><path d="M912.3 77.6L905.9000000000001 99.8" stroke="#a58f8a" stroke-width="2.4" stroke-linecap="round"/></svg>
<svg style="left:0;top:0" width="2880" height="200"><path d="M1226.3999999999999 77.6L1219.7 99.8" stroke="#a58f8a" stroke-width="2.4" stroke-linecap="round"/></svg>
<svg style="left:858.4px;top:74.4px" width="27.2" height="27.2" viewBox="0 0 24 24"><path d="M21.469 6.825c.84 1.537 1.318 3.3 1.318 5.175 0 3.979-2.156 7.456-5.363 9.325l3.295-9.527c.615-1.54.82-2.771.82-3.864 0-.405-.026-.78-.07-1.11m-7.981.105c.647-.03 1.232-.105 1.232-.105.582-.075.514-.93-.067-.899 0 0-1.755.135-2.88.135-1.064 0-2.85-.15-2.85-.15-.585-.03-.661.855-.075.885 0 0 .54.061 1.125.09l1.68 4.605-2.37 7.08L5.354 6.9c.649-.03 1.234-.1 1.234-.1.585-.075.516-.93-.065-.896 0 0-1.746.138-2.874.138-.2 0-.438-.008-.69-.015C4.911 3.15 8.235 1.215 12 1.215c2.809 0 5.365 1.072 7.286 2.833-.046-.003-.091-.009-.141-.009-1.06 0-1.812.923-1.812 1.914 0 .89.513 1.643 1.06 2.531.411.72.89 1.643.89 2.977 0 .915-.354 1.994-.821 3.479l-1.075 3.585-3.9-11.61.001.014zM12 22.784c-1.059 0-2.081-.153-3.048-.437l3.237-9.406 3.315 9.087c.024.053.05.101.078.149-1.12.393-2.325.609-3.582.609M1.211 12c0-1.564.336-3.05.935-4.39L7.29 21.709C3.694 19.96 1.212 16.271 1.211 12M12 0C5.385 0 0 5.385 0 12s5.385 12 12 12 12-5.385 12-12S18.615 0 12 0" fill="#f6efea"/></svg>
<div class="a" style="left:1245.6px;top:79.5px;width:16.8px;height:16.8px;border-radius:50%;background:#12a544"></div>
<svg style="left:2190px;top:66px" width="44" height="44"><circle cx="18.2" cy="18.2" r="11.2" fill="none" stroke="#f6efea" stroke-width="3.2"/><path d="M26.5 26.5L36 36" stroke="#f6efea" stroke-width="3.6" stroke-linecap="round"/></svg>
<svg style="left:2284px;top:66px" width="52" height="44" viewBox="0 0 52 44"><g fill="none" stroke="#f6efea" stroke-width="2.8" stroke-linejoin="round" stroke-linecap="round"><path d="M23.8 8.6C16.6 8.6 12.8 14 12.8 21V26.5C12.8 29.6 11.4 31.6 9.6 33.4H38C36.2 31.6 34.8 29.6 34.8 26.5V21C34.8 14 31 8.6 23.8 8.6Z"/><path d="M23.8 5.6V8.6"/></g><path d="M19.8 36.2Q23.8 41 27.8 36.2Z" fill="#f6efea" stroke="#f6efea" stroke-width="1.6" stroke-linejoin="round"/><circle cx="42" cy="3.8" r="6" fill="#e0300f"/></svg>
<svg style="left:2386.0px;top:69.8px" width="36" height="36" viewBox="0 0 24 24"><circle cx="12" cy="12" r="10" fill="none" stroke="#f6efea" stroke-width="2.2"/><path d="M9.1 9a3 3 0 0 1 5.8 1c0 2-3 2.6-3 4" fill="none" stroke="#f6efea" stroke-width="2.2" stroke-linecap="round"/><circle cx="11.9" cy="17.6" r="1.6500000000000001" fill="#f6efea"/></svg>
<svg style="left:2482px;top:62px" width="52" height="52" viewBox="0 0 52 52"><defs><clipPath id="av"><circle cx="26" cy="26" r="23"/></clipPath><radialGradient id="sk" cx="0.45" cy="0.42" r="0.6"><stop offset="0" stop-color="#f0c8b0"/><stop offset="1" stop-color="#d09a80"/></radialGradient></defs><g clip-path="url(#av)"><rect width="52" height="52" fill="#2a1a16"/><rect x="0" y="0" width="16" height="52" fill="#c8c0bf"/><path d="M14 52V20Q16 8 30 7Q44 8 47 22V52Z" fill="#1e1210"/><ellipse cx="30.5" cy="31" rx="12.8" ry="16.5" fill="url(#sk)"/><path d="M17.5 24Q20 11 31 11Q41 12 44 22Q38 15 30 16Q22 17 18 27Z" fill="#1e1210"/><path d="M21 24.5Q24 23.5 27 24.8M33.5 24.8Q36.5 23.5 39.5 24.5" stroke="#5a3528" stroke-width="1.3" fill="none"/><ellipse cx="24.5" cy="28" rx="2" ry="1" fill="#4a2a20"/><ellipse cx="35.5" cy="28" rx="2" ry="1" fill="#4a2a20"/><path d="M26 38.5Q29.5 40.5 33 38.5Q29.5 37 26 38.5Z" fill="#c04a5a"/><path d="M16 52Q18 46 30 47Q42 46 44 52Z" fill="#e8e0dc"/></g><circle cx="26" cy="26" r="23.4" fill="none" stroke="#f6efea" stroke-width="2.4"/></svg>
<svg style="left:56px;top:242px" width="40" height="36" viewBox="0 0 40 36"><path d="M4.5 17.9L19.85 4.5L35.5 17.9" fill="none" stroke="#1d1919" stroke-width="2.9" stroke-linecap="round" stroke-linejoin="round"/><path d="M19.85 8.65L32.8 19.3V28.1Q32.8 32.9 28 32.9H11.9Q7.1 32.9 7.1 28.1V19.3Z" fill="#1d1919" stroke="#1d1919" stroke-width="0.8" stroke-linejoin="round"/><path d="M15.85 30V26Q15.85 22 19.95 22Q24.1 22 24.1 26V30Z" fill="#eadfd8"/></svg>
<svg style="left:58.2px;top:322.1px" width="35.4" height="35.4" viewBox="0 0 24 24"><path d="M21.469 6.825c.84 1.537 1.318 3.3 1.318 5.175 0 3.979-2.156 7.456-5.363 9.325l3.295-9.527c.615-1.54.82-2.771.82-3.864 0-.405-.026-.78-.07-1.11m-7.981.105c.647-.03 1.232-.105 1.232-.105.582-.075.514-.93-.067-.899 0 0-1.755.135-2.88.135-1.064 0-2.85-.15-2.85-.15-.585-.03-.661.855-.075.885 0 0 .54.061 1.125.09l1.68 4.605-2.37 7.08L5.354 6.9c.649-.03 1.234-.1 1.234-.1.585-.075.516-.93-.065-.896 0 0-1.746.138-2.874.138-.2 0-.438-.008-.69-.015C4.911 3.15 8.235 1.215 12 1.215c2.809 0 5.365 1.072 7.286 2.833-.046-.003-.091-.009-.141-.009-1.06 0-1.812.923-1.812 1.914 0 .89.513 1.643 1.06 2.531.411.72.89 1.643.89 2.977 0 .915-.354 1.994-.821 3.479l-1.075 3.585-3.9-11.61.001.014zM12 22.784c-1.059 0-2.081-.153-3.048-.437l3.237-9.406 3.315 9.087c.024.053.05.101.078.149-1.12.393-2.325.609-3.582.609M1.211 12c0-1.564.336-3.05.935-4.39L7.29 21.709C3.694 19.96 1.212 16.271 1.211 12M12 0C5.385 0 0 5.385 0 12s5.385 12 12 12 12-5.385 12-12S18.615 0 12 0" fill="#4a4141"/></svg>
<svg style="left:56px;top:403px" width="40" height="38" viewBox="0 0 40 38"><g fill="none" stroke="#4a4141" stroke-width="3.2" stroke-linecap="round" stroke-linejoin="round"><path d="M13.5 30.8H8Q4.6 30.8 4.6 27.4V8Q4.6 4.6 8 4.6H32Q35.4 4.6 35.4 8V27.4Q35.4 30.8 32 30.8H27"/></g><path d="M4.6 12.2V8Q4.6 4.6 8 4.6H32Q35.4 4.6 35.4 8V12.2Z" fill="#4a4141"/><circle cx="10.2" cy="8.4" r="1.4" fill="#f8f4f1"/><circle cx="14.6" cy="8.4" r="1.4" fill="#f8f4f1"/><circle cx="19" cy="8.4" r="1.4" fill="#f8f4f1"/><path d="M23.8 16.5L14.8 26.3H20.2L16.6 34.8L26.4 24H21.2Z" fill="#4a4141" stroke="#4a4141" stroke-width="1.8" stroke-linejoin="round"/></svg>
<svg style="left:56px;top:480px" width="40" height="40" viewBox="0 0 40 40"><g stroke="#4a4141" stroke-width="3" stroke-linejoin="round" stroke-linecap="round"><path d="M20 3.5L34.2 11.8L20 20L5.8 11.8Z" fill="#4a4141"/><path d="M9.5 17.5L5.8 19.6L20 27.8L34.2 19.6L30.5 17.5" fill="none"/><path d="M9.5 25.3L5.8 27.4L20 35.6L34.2 27.4L30.5 25.3" fill="none"/></g></svg>
<svg style="left:56px;top:560px" width="40" height="40" viewBox="0 0 40 40"><path d="M4.5 9Q4.5 3 20 3Q35.5 3 35.5 9V31Q35.5 37 20 37Q4.5 37 4.5 31Z" fill="#4a4141"/><path d="M4.5 14.5Q8 19.5 20 19.5Q32 19.5 35.5 14.5M4.5 25Q8 30 20 30Q32 30 35.5 25" fill="none" stroke="#f8f4f1" stroke-width="2.6"/></svg>
<svg style="left:56px;top:644px" width="40" height="32" viewBox="0 0 40 32"><g fill="none" stroke="#4a4141" stroke-width="3.8" stroke-linecap="round"><path d="M17 8H34"/><path d="M6.5 23H23"/><path d="M14 10.5L25 20.5"/><circle cx="12.2" cy="8" r="3.9"/><circle cx="27.8" cy="23.2" r="3.9"/></g></svg>
<svg style="left:520.0px;top:242.5px" width="43" height="43" viewBox="0 0 24 24"><path d="M21.469 6.825c.84 1.537 1.318 3.3 1.318 5.175 0 3.979-2.156 7.456-5.363 9.325l3.295-9.527c.615-1.54.82-2.771.82-3.864 0-.405-.026-.78-.07-1.11m-7.981.105c.647-.03 1.232-.105 1.232-.105.582-.075.514-.93-.067-.899 0 0-1.755.135-2.88.135-1.064 0-2.85-.15-2.85-.15-.585-.03-.661.855-.075.885 0 0 .54.061 1.125.09l1.68 4.605-2.37 7.08L5.354 6.9c.649-.03 1.234-.1 1.234-.1.585-.075.516-.93-.065-.896 0 0-1.746.138-2.874.138-.2 0-.438-.008-.69-.015C4.911 3.15 8.235 1.215 12 1.215c2.809 0 5.365 1.072 7.286 2.833-.046-.003-.091-.009-.141-.009-1.06 0-1.812.923-1.812 1.914 0 .89.513 1.643 1.06 2.531.411.72.89 1.643.89 2.977 0 .915-.354 1.994-.821 3.479l-1.075 3.585-3.9-11.61.001.014zM12 22.784c-1.059 0-2.081-.153-3.048-.437l3.237-9.406 3.315 9.087c.024.053.05.101.078.149-1.12.393-2.325.609-3.582.609M1.211 12c0-1.564.336-3.05.935-4.39L7.29 21.709C3.694 19.96 1.212 16.271 1.211 12M12 0C5.385 0 0 5.385 0 12s5.385 12 12 12 12-5.385 12-12S18.615 0 12 0" fill="#1d1919"/></svg>
<svg style="left:890.5px;top:1816.5px" width="29" height="29" viewBox="0 0 24 24"><g fill="none" stroke="#7a6562" stroke-width="1.75" stroke-linecap="round" stroke-linejoin="round"><path d="M11 5H6Q3 5 3 8V18Q3 21 6 21H16Q19 21 19 18V13"/><path d="M14 3H21V10"/><path d="M10 14L21 3"/></g></svg>
<svg style="left:2632.2000000000003px;top:1955px" width="29" height="29" viewBox="0 0 24 24"><g fill="none" stroke="#4a4141" stroke-width="1.75" stroke-linecap="round" stroke-linejoin="round"><path d="M11 5H6Q3 5 3 8V18Q3 21 6 21H16Q19 21 19 18V13"/><path d="M14 3H21V10"/><path d="M10 14L21 3"/></g></svg>
<svg style="left:2662.3px;top:2009px" width="29" height="29" viewBox="0 0 24 24"><g fill="none" stroke="#4a4141" stroke-width="1.75" stroke-linecap="round" stroke-linejoin="round"><path d="M11 5H6Q3 5 3 8V18Q3 21 6 21H16Q19 21 19 18V13"/><path d="M14 3H21V10"/><path d="M10 14L21 3"/></g></svg>
<svg style="left:2650.4px;top:2063px" width="29" height="29" viewBox="0 0 24 24"><g fill="none" stroke="#4a4141" stroke-width="1.75" stroke-linecap="round" stroke-linejoin="round"><path d="M11 5H6Q3 5 3 8V18Q3 21 6 21H16Q19 21 19 18V13"/><path d="M14 3H21V10"/><path d="M10 14L21 3"/></g></svg>
<svg style="left:2710.6px;top:2117px" width="29" height="29" viewBox="0 0 24 24"><g fill="none" stroke="#4a4141" stroke-width="1.75" stroke-linecap="round" stroke-linejoin="round"><path d="M11 5H6Q3 5 3 8V18Q3 21 6 21H16Q19 21 19 18V13"/><path d="M14 3H21V10"/><path d="M10 14L21 3"/></g></svg>
<svg style="left:2681.9px;top:1903.9px" width="22" height="22" viewBox="0 0 24 24"><circle cx="12" cy="12" r="10" fill="none" stroke="#4a4141" stroke-width="2.0"/><path d="M9.1 9a3 3 0 0 1 5.8 1c0 2-3 2.6-3 4" fill="none" stroke="#4a4141" stroke-width="2.0" stroke-linecap="round"/><circle cx="11.9" cy="17.6" r="1.5" fill="#4a4141"/></svg>
<div class="a" style="left:2000px;top:1789.5px;width:796px;height:76px;border:2px solid #ebddd7;border-radius:14px;background:#fff"></div>
<svg style="left:2030px;top:1816px" width="28" height="28" viewBox="0 0 28 28"><circle cx="11.5" cy="11.5" r="7" fill="none" stroke="#7a6562" stroke-width="2.6"/><path d="M17 17L22.5 22.5" stroke="#7a6562" stroke-width="3.4" stroke-linecap="round"/></svg>
<svg style="left:564px;top:1902px" width="449.5" height="226" viewBox="0 0 450 226"><defs><radialGradient id="g1a" cx="0.5" cy="0.5" r="0.5"><stop offset="0" stop-color="#2c4a26" stop-opacity="0.9"/><stop offset="1" stop-color="#2c1a1a" stop-opacity="0"/></radialGradient><linearGradient id="leaf" x1="0" y1="0" x2="1" y2="0.3"><stop offset="0" stop-color="#10d050"/><stop offset="0.5" stop-color="#58b03a"/><stop offset="1" stop-color="#e0621e"/></linearGradient><linearGradient id="leaf2" x1="1" y1="0" x2="0" y2="1"><stop offset="0" stop-color="#12c850"/><stop offset="0.5" stop-color="#6a9a34"/><stop offset="1" stop-color="#e0601c"/></linearGradient><linearGradient id="leaf3" x1="1" y1="1" x2="0" y2="0"><stop offset="0" stop-color="#12c850"/><stop offset="1" stop-color="#d8601e"/></linearGradient><linearGradient id="spout" x1="0" y1="0" x2="1" y2="0.4"><stop offset="0" stop-color="#c8481c"/><stop offset="0.6" stop-color="#7a4a22"/><stop offset="1" stop-color="#3a7a34"/></linearGradient><linearGradient id="arm1" x1="0" y1="0" x2="1" y2="1"><stop offset="0" stop-color="#6a4a26"/><stop offset="1" stop-color="#2e4a26"/></linearGradient><linearGradient id="hand" x1="0" y1="0" x2="0" y2="1"><stop offset="0" stop-color="#5a2c1c"/><stop offset="0.5" stop-color="#351f1c"/><stop offset="1" stop-color="#2c1a1a"/></linearGradient><radialGradient id="soil" cx="0.5" cy="0.3" r="0.6"><stop offset="0" stop-color="#c04a1a"/><stop offset="1" stop-color="#5a2a1a"/></radialGradient><clipPath id="ic564"><rect width="450" height="226" rx="8.5"/></clipPath></defs><g clip-path="url(#ic564)"><rect width="450" height="226" fill="#311c1c"/><ellipse cx="180" cy="85" rx="120" ry="90" fill="url(#g1a)"/><rect x="115" y="18" width="117" height="121" fill="#2f4a28" opacity="0.18"/><path d="M362 0H450V100H440Z" fill="url(#arm1)" opacity="0.75"/><path d="M268 42L300 60L440 70L450 100L300 75L268 88Z" fill="url(#spout)" opacity="0.9"/><ellipse cx="148" cy="82" rx="35" ry="19" transform="rotate(14 148 82)" fill="url(#leaf)"/><ellipse cx="221" cy="53" rx="17" ry="33" transform="rotate(32 221 53)" fill="url(#leaf2)"/><path d="M232 104Q240 86 256 90Q264 94 268 104Z" fill="url(#leaf3)"/><path d="M205 138Q203 115 196 102Q188 92 180 92M205 115Q207 100 212 82M206 110Q215 102 232 101" stroke="#9a3a1e" stroke-width="3.2" fill="none"/><g fill="#ff4a10"><rect x="192" y="58" width="6" height="12"/><rect x="207" y="54" width="6" height="6"/><rect x="244" y="50" width="6" height="6"/><rect x="242" y="57" width="6" height="6"/><rect x="235" y="68" width="6" height="6"/><rect x="258" y="62" width="6" height="6"/><rect x="248" y="80" width="6" height="6"/><rect x="230" y="76" width="6" height="12"/><rect x="193" y="82" width="6" height="12"/><rect x="210" y="98" width="6" height="6"/><rect x="206" y="103" width="6" height="12"/><rect x="172" y="107" width="12" height="6"/><rect x="157" y="114" width="6" height="6"/><rect x="185" y="121" width="6" height="12"/><rect x="216" y="113" width="6" height="6"/><rect x="173" y="131" width="6" height="6"/><rect x="210" y="132" width="6" height="6"/><rect x="203" y="141" width="6" height="6"/><rect x="241" y="132" width="6" height="6"/><rect x="178" y="148" width="6" height="6"/><rect x="222" y="153" width="6" height="6"/><rect x="250" y="86" width="6" height="6"/></g><g fill="#14c050"><rect x="166" y="57" width="6" height="6"/><rect x="186" y="72" width="6" height="6"/><rect x="218" y="83" width="6" height="6"/><rect x="264" y="57" width="6" height="6"/><rect x="273" y="33" width="6" height="6"/><rect x="263" y="81" width="6" height="6"/><rect x="212" y="120" width="6" height="6"/><rect x="191" y="128" width="6" height="12"/></g><ellipse cx="205" cy="148" rx="38" ry="14" fill="url(#soil)"/><path d="M137 158Q160 146 195 140Q225 130 262 136Q300 138 318 147Q335 162 362 199L383 226H298Q285 205 250 203Q215 202 191 199Q160 190 145 175Q136 166 137 158Z" fill="url(#hand)"/><path d="M137 158Q160 146 195 140Q225 130 262 136Q300 138 318 147Q335 162 362 199L383 226" fill="none" stroke="#4a9a3e" stroke-width="3.2" opacity="0.85"/><path d="M191 199Q230 203 265 202Q290 204 298 226" fill="none" stroke="#3a6a30" stroke-width="2" opacity="0.6"/><path d="M62 166Q80 160 110 175L150 190Q175 198 191 199Q165 207 135 203Q95 192 72 178Q60 172 62 166Z" fill="#3e2420"/><path d="M62 166Q80 160 110 175L150 190Q175 198 191 199" fill="none" stroke="#4a9a3e" stroke-width="2.8" opacity="0.85"/><path d="M72 178Q95 192 135 203Q165 207 191 199" fill="none" stroke="#3a7a34" stroke-width="2.2" opacity="0.7"/><g fill="none" stroke-linecap="round" stroke-width="5.5" opacity="0.75"><path d="M67 154Q85 152 108 168L140 183" stroke="#b04a22"/><path d="M91 149Q103 150 118 166L145 183" stroke="#a8421e"/><path d="M121 151Q131 154 140 170L148 183" stroke="#9a3e1e"/></g><path d="M67 154Q85 152 108 168M91 149Q103 150 118 166M121 151Q131 154 140 170" fill="none" stroke="#6aa040" stroke-width="1.4" opacity="0.5"/><path d="M170 150Q205 128 250 145Q215 160 170 150Z" fill="#b8441a" opacity="0.55"/></g></svg>
<svg style="left:1045.5px;top:1902px" width="449.5" height="226" viewBox="0 0 450 226"><defs><linearGradient id="ball" x1="0.2" y1="0" x2="0.8" y2="1"><stop offset="0" stop-color="#ffe27a"/><stop offset="0.5" stop-color="#ffc23a"/><stop offset="1" stop-color="#ff6a14"/></linearGradient><filter id="blur2" x="-30%" y="-30%" width="160%" height="160%"><feGaussianBlur stdDeviation="10"/></filter><radialGradient id="g2a" cx="0.5" cy="0.55" r="0.5"><stop offset="0" stop-color="#6a2412" stop-opacity="0.9"/><stop offset="1" stop-color="#2c1a1a" stop-opacity="0"/></radialGradient><linearGradient id="hand2" x1="1" y1="0" x2="0" y2="1"><stop offset="0" stop-color="#d88a2a"/><stop offset="0.5" stop-color="#7a3a18"/><stop offset="1" stop-color="#2c1a1a"/></linearGradient><clipPath id="ic1045"><rect width="450" height="226" rx="8.5"/></clipPath></defs><g clip-path="url(#ic1045)"><rect width="450" height="226" fill="#311c1c"/><ellipse cx="228" cy="150" rx="170" ry="120" fill="url(#g2a)"/><rect x="150" y="60" width="155" height="175" fill="#c8501a" opacity="0.55" filter="url(#blur2)"/><rect x="154" y="62" width="147" height="170" fill="#8a3418" opacity="0.8"/><path d="M-21 0A21 21 0 0 1 21 0Z" transform="translate(208.5 106) rotate(0)" fill="url(#ball)"/><path d="M-21 0A21 21 0 0 1 21 0Z" transform="translate(263.9 67) rotate(32)" fill="url(#ball)"/><path d="M-21 0A21 21 0 0 1 21 0Z" transform="translate(251.8 95) rotate(90)" fill="url(#ball)"/><path d="M-19 0A19 19 0 0 1 19 0Z" transform="translate(171 118) rotate(0)" fill="url(#ball)"/><path d="M-20 0A20 20 0 0 1 20 0Z" transform="translate(213 113) rotate(187)" fill="url(#ball)"/><path d="M-21 0A21 21 0 0 1 21 0Z" transform="translate(244.2 139) rotate(0)" fill="url(#ball)"/><path d="M-21 0A21 21 0 0 1 21 0Z" transform="translate(184.3 157) rotate(-28)" fill="url(#ball)"/><path d="M-20 0A20 20 0 0 1 20 0Z" transform="translate(282 162.2) rotate(0)" fill="url(#ball)"/><path d="M-21 0A21 21 0 0 1 21 0Z" transform="translate(225.6 169) rotate(19)" fill="url(#ball)"/><path d="M-20 0A20 20 0 0 1 20 0Z" transform="translate(173.7 186.8) rotate(-21)" fill="url(#ball)"/><path d="M-20 0A20 20 0 0 1 20 0Z" transform="translate(213 177) rotate(191)" fill="url(#ball)"/><path d="M-21 0A21 21 0 0 1 21 0Z" transform="translate(269 184.3) rotate(-25)" fill="url(#ball)"/><path d="M-20 0A20 20 0 0 1 20 0Z" transform="translate(269 225.6) rotate(0)" fill="url(#ball)"/><path d="M-19 0A19 19 0 0 1 19 0Z" transform="translate(182.3 223.6) rotate(-20)" fill="url(#ball)"/><path d="M-21 0A21 21 0 0 1 21 0Z" transform="translate(239.7 225.6) rotate(0)" fill="url(#ball)"/><circle cx="200" cy="138" r="9" fill="url(#ball)"/><circle cx="160" cy="100" r="8" fill="url(#ball)"/><circle cx="296" cy="140" r="8" fill="url(#ball)"/><circle cx="226" cy="150" r="8" fill="url(#ball)"/><circle cx="200" cy="200" r="9" fill="url(#ball)"/><circle cx="296" cy="210" r="9" fill="url(#ball)"/><circle cx="255" cy="120" r="8" fill="url(#ball)"/><circle cx="170" cy="205" r="8" fill="url(#ball)"/><circle cx="225" cy="205" r="7" fill="url(#ball)"/><circle cx="260" cy="205" r="8" fill="url(#ball)"/><circle cx="170.8" cy="79.6" r="11" fill="url(#ball)"/><circle cx="211.5" cy="66.1" r="11" fill="url(#ball)"/><circle cx="283" cy="35.9" r="11" fill="url(#ball)"/><circle cx="239.3" cy="102.4" r="10.5" fill="url(#ball)"/><circle cx="290.5" cy="98.7" r="11" fill="url(#ball)"/><circle cx="187" cy="113.8" r="10.5" fill="url(#ball)"/><circle cx="164.8" cy="124.5" r="11" fill="url(#ball)"/><circle cx="284" cy="121.3" r="10.5" fill="url(#ball)"/><circle cx="235.3" cy="134" r="11.5" fill="url(#ball)"/><circle cx="254.8" cy="150.7" r="11" fill="url(#ball)"/><circle cx="191.8" cy="166.8" r="11" fill="url(#ball)"/><circle cx="238.7" cy="190.4" r="10.7" fill="url(#ball)"/><circle cx="290" cy="189" r="11" fill="url(#ball)"/><circle cx="208.5" cy="217.6" r="10" fill="url(#ball)"/><circle cx="158" cy="152" r="7" fill="url(#ball)"/><rect x="154" y="62" width="147" height="170" fill="none" stroke="#8a5a50" stroke-width="1.2" opacity="0.5"/><path d="M252 24Q290 8 330 14Q345 20 348 34Q400 40 450 46V0H300Q270 8 252 24Z" fill="#3a2019" opacity="0.6"/><path d="M252 24Q290 12 320 16Q345 22 350 34M300 42Q330 40 345 50Q375 70 450 46M292 70Q300 55 310 48" fill="none" stroke="#e0902a" stroke-width="2.5" opacity="0.7"/><path d="M0 155Q40 125 80 116Q110 110 130 100Q152 84 155 78Q158 92 142 108Q120 118 102 122Q118 135 120 165L127 202Q115 196 112 175Q100 190 98 198Q92 185 100 160Q60 170 30 200L0 215Z" fill="#3a2019" opacity="0.9"/><path d="M0 155Q40 125 80 116Q110 110 130 100Q152 84 155 78M102 122Q118 135 120 165L127 202M100 160Q92 185 98 198" fill="none" stroke="#d0701e" stroke-width="2.5" opacity="0.6"/><path d="M110 112Q135 100 150 82" fill="none" stroke="#f0902a" stroke-width="6" stroke-linecap="round" opacity="0.8"/><path d="M104 140Q114 150 116 175M100 165Q95 180 97 195" fill="none" stroke="#e0802a" stroke-width="4" stroke-linecap="round" opacity="0.6"/></g></svg>
<svg style="left:1527px;top:1902px" width="449.5" height="226" viewBox="0 0 450 226"><defs><linearGradient id="win" x1="0" y1="0" x2="0.1" y2="1"><stop offset="0" stop-color="#8e3212"/><stop offset="0.6" stop-color="#6a2614"/><stop offset="1" stop-color="#4a1c16"/></linearGradient><linearGradient id="cabR" x1="0" y1="0" x2="1" y2="0"><stop offset="0" stop-color="#ffc8b8"/><stop offset="0.35" stop-color="#ff5a7a"/><stop offset="1" stop-color="#ff3aa0"/></linearGradient><radialGradient id="sock" cx="0.5" cy="0.5" r="0.5"><stop offset="0" stop-color="#ffd0c0"/><stop offset="0.5" stop-color="#ff5a2a"/><stop offset="1" stop-color="#ff3a10" stop-opacity="0"/></radialGradient><clipPath id="ic1527"><rect width="450" height="226" rx="8.5"/></clipPath></defs><g clip-path="url(#ic1527)"><rect width="450" height="226" fill="#311c1c"/><path d="M99 37L368 14Q380 13 382 25L395 167Q396 179 384 180L112 207Q100 208 99 196L85 52Q84 39 99 37Z" fill="url(#win)"/><path d="M99 37L368 14Q380 13 382 25L383 32L86 57L85 52Q84 39 99 37Z" fill="#9a6a60"/><path d="M130 44L345 26" stroke="#7a4a44" stroke-width="6" stroke-linecap="round"/><circle cx="95" cy="47" r="2.5" fill="#6a3a34"/><circle cx="105" cy="46" r="2.5" fill="#6a3a34"/><circle cx="115" cy="45" r="2.5" fill="#6a3a34"/><path d="M133 66L340 48Q344 48 344 52L345 57Q345 61 341 61L135 75Q131 75 131 71Z" fill="#2c1410"/><path d="M135 95L236 86L238 98L137 107ZM243 85L345 76L347 88L245 97Z" fill="#a83a14" opacity="0.8"/><path d="M138 118L240 109L248 170L145 180ZM246 108L348 98L355 160L252 170Z" fill="#5a2014" opacity="0.85"/><path d="M252 125L340 117L345 160L257 168Z" fill="none" stroke="#c84a20" stroke-width="0.8" opacity="0.7"/><circle cx="176" cy="150" r="13" fill="none" stroke="#b8401a" stroke-width="2" opacity="0.7"/><circle cx="176" cy="150" r="5" fill="#8a2e14"/><g fill="none" stroke-linecap="round" stroke-width="7"><path d="M118 74Q100 90 108 110Q115 140 70 150Q20 160 30 110Q40 60 80 70Q120 90 90 130Q60 170 20 140Q-5 120 5 80" stroke="#ff4aa8"/><path d="M121 99Q90 110 60 90Q40 70 60 55Q90 45 80 95Q70 150 40 190Q20 215 60 210Q100 200 90 170Q80 140 40 150Q10 160 5 190" stroke="#ff3a14"/><path d="M122 129Q80 140 50 120Q20 100 30 50Q35 30 45 60Q55 100 30 140Q10 180 40 200Q70 215 110 190" stroke="#ff4aa8"/><path d="M125 159Q90 150 60 170Q30 190 20 160Q10 130 50 120Q90 110 100 150Q105 180 70 190" stroke="#ff3a14"/><path d="M127 188Q105 170 95 140Q85 110 60 130Q30 150 15 120Q0 90 10 60" stroke="#ff5aa0"/><path d="M0 70Q30 110 60 100Q100 90 95 60Q90 40 60 80Q40 110 70 140Q100 170 60 185" stroke="#ff3a14"/></g><circle cx="118.9" cy="73.5" r="8" fill="url(#sock)"/><circle cx="120.9" cy="98.7" r="8" fill="url(#sock)"/><circle cx="121.9" cy="129" r="8" fill="url(#sock)"/><circle cx="124.9" cy="159.2" r="8" fill="url(#sock)"/><circle cx="126.9" cy="188.4" r="8" fill="url(#sock)"/><circle cx="358.6" cy="48.4" r="8" fill="url(#sock)"/><circle cx="360.6" cy="77.6" r="8" fill="url(#sock)"/><circle cx="362.6" cy="107.8" r="8" fill="url(#sock)"/><circle cx="365.6" cy="137" r="8" fill="url(#sock)"/><circle cx="368.6" cy="169.2" r="8" fill="url(#sock)"/><path d="M358.6 48.4Q404.3 14.440000000000001 452 4" fill="none" stroke="url(#cabR)" stroke-width="6" stroke-linecap="round"/><path d="M360.6 77.6Q405.3 59.12 452 50.4" fill="none" stroke="url(#cabR)" stroke-width="6" stroke-linecap="round"/><path d="M362.6 107.8Q406.3 105.61 452 98.7" fill="none" stroke="url(#cabR)" stroke-width="6" stroke-linecap="round"/><path d="M365.6 137Q407.8 152.0 452 147" fill="none" stroke="url(#cabR)" stroke-width="6" stroke-linecap="round"/><path d="M368.6 169.2Q409.3 191.58 452 187.4" fill="none" stroke="url(#cabR)" stroke-width="6" stroke-linecap="round"/></g></svg>
<svg style="left:2008.5px;top:1902px" width="449.5" height="226" viewBox="0 0 450 226"><defs><linearGradient id="gl4" x1="0" y1="0" x2="0" y2="1"><stop offset="0" stop-color="#f8c832"/><stop offset="0.45" stop-color="#eea014"/><stop offset="1" stop-color="#b85414"/></linearGradient><linearGradient id="pil" x1="0" y1="0" x2="0" y2="1"><stop offset="0" stop-color="#7a3414"/><stop offset="1" stop-color="#3a1e18" stop-opacity="0.4"/></linearGradient><filter id="blur4" x="-20%" y="-20%" width="140%" height="140%"><feGaussianBlur stdDeviation="6"/></filter><clipPath id="ic2008"><rect width="450" height="226" rx="8.5"/></clipPath></defs><g clip-path="url(#ic2008)"><rect width="450" height="226" fill="#311c1c"/><rect x="76" y="17" width="305" height="240" rx="44" fill="#50261a" filter="url(#blur4)"/><rect x="97" y="37" width="260" height="210" rx="30" fill="#874014" filter="url(#blur4)"/><rect x="97" y="150" width="260" height="90" fill="#5a2a16" opacity="0.8"/><rect x="48.5" y="66.5" width="32" height="173.5" fill="url(#pil)" opacity="0.7"/><rect x="97.8" y="118.9" width="32" height="121.1" fill="url(#pil)" opacity="0.7"/><rect x="21.299999999999997" y="175.3" width="32" height="64.69999999999999" fill="url(#pil)" opacity="0.7"/><rect x="368.8" y="97.7" width="32" height="142.3" fill="url(#pil)" opacity="0.7"/><rect x="409" y="145" width="32" height="95" fill="url(#pil)" opacity="0.7"/><rect x="279.5" y="162.2" width="32" height="77.80000000000001" fill="url(#pil)" opacity="0.7"/><rect x="111" y="51" width="229" height="137" rx="20" fill="url(#gl4)"/><rect x="111" y="51" width="229" height="137" rx="20" fill="none" stroke="#d86a14" stroke-width="2" opacity="0.7"/><circle cx="226" cy="120" r="31.5" fill="#eee0da"/><g transform="translate(194.5 88.5) scale(2.625)"><path d="M21.469 6.825c.84 1.537 1.318 3.3 1.318 5.175 0 3.979-2.156 7.456-5.363 9.325l3.295-9.527c.615-1.54.82-2.771.82-3.864 0-.405-.026-.78-.07-1.11m-7.981.105c.647-.03 1.232-.105 1.232-.105.582-.075.514-.93-.067-.899 0 0-1.755.135-2.88.135-1.064 0-2.85-.15-2.85-.15-.585-.03-.661.855-.075.885 0 0 .54.061 1.125.09l1.68 4.605-2.37 7.08L5.354 6.9c.649-.03 1.234-.1 1.234-.1.585-.075.516-.93-.065-.896 0 0-1.746.138-2.874.138-.2 0-.438-.008-.69-.015C4.911 3.15 8.235 1.215 12 1.215c2.809 0 5.365 1.072 7.286 2.833-.046-.003-.091-.009-.141-.009-1.06 0-1.812.923-1.812 1.914 0 .89.513 1.643 1.06 2.531.411.72.89 1.643.89 2.977 0 .915-.354 1.994-.821 3.479l-1.075 3.585-3.9-11.61.001.014zM12 22.784c-1.059 0-2.081-.153-3.048-.437l3.237-9.406 3.315 9.087c.024.053.05.101.078.149-1.12.393-2.325.609-3.582.609M1.211 12c0-1.564.336-3.05.935-4.39L7.29 21.709C3.694 19.96 1.212 16.271 1.211 12M12 0C5.385 0 0 5.385 0 12s5.385 12 12 12 12-5.385 12-12S18.615 0 12 0" fill="#d8780e"/></g><circle cx="226" cy="120" r="28" fill="none" stroke="#d8780e" stroke-width="1"/><rect x="48.5" y="50.5" width="32" height="32" rx="8" fill="#8a3a18" opacity="0.7"/><rect x="52.5" y="54.5" width="24" height="24" rx="6" fill="#d8501c" opacity="0.85"/><circle cx="64.5" cy="66.5" r="4.5" fill="#e8b0a0" opacity="0.55"/><rect x="97.8" y="102.9" width="32" height="32" rx="8" fill="#8a3a18" opacity="0.7"/><rect x="101.8" y="106.9" width="24" height="24" rx="6" fill="#d8501c" opacity="0.85"/><circle cx="113.8" cy="118.9" r="4.5" fill="#e8b0a0" opacity="0.55"/><rect x="21.299999999999997" y="159.3" width="32" height="32" rx="8" fill="#8a3a18" opacity="0.7"/><rect x="25.299999999999997" y="163.3" width="24" height="24" rx="6" fill="#d8501c" opacity="0.85"/><circle cx="37.3" cy="175.3" r="4.5" fill="#e8b0a0" opacity="0.55"/><rect x="368.8" y="81.7" width="32" height="32" rx="8" fill="#8a3a18" opacity="0.7"/><rect x="372.8" y="85.7" width="24" height="24" rx="6" fill="#d8501c" opacity="0.85"/><circle cx="384.8" cy="97.7" r="4.5" fill="#e8b0a0" opacity="0.55"/><rect x="409" y="129" width="32" height="32" rx="8" fill="#8a3a18" opacity="0.7"/><rect x="413" y="133" width="24" height="24" rx="6" fill="#d8501c" opacity="0.85"/><circle cx="425" cy="145" r="4.5" fill="#e8b0a0" opacity="0.55"/><rect x="279.5" y="146.2" width="32" height="32" rx="8" fill="#8a3a18" opacity="0.7"/><rect x="283.5" y="150.2" width="24" height="24" rx="6" fill="#d8501c" opacity="0.85"/><circle cx="295.5" cy="162.2" r="4.5" fill="#e8b0a0" opacity="0.55"/><path d="M193 0V40" stroke="#6a3a24" stroke-width="2"/></g></svg>
<div class="t" style="left:519.4px;top:73.1px;font-family:'Liberation Sans';font-size:30.09px;font-weight:400;letter-spacing:-0.169px;color:#f6f0ec">Brown Bear Studio</div>
<div class="t" style="left:931.5px;top:73.4px;font-family:'Liberation Sans';font-size:30.09px;font-weight:400;letter-spacing:0.069px;color:#f6f0ec">Happy Avocados</div>
<div class="t" style="left:1277.2px;top:73.2px;font-family:'Liberation Sans';font-size:30.09px;font-weight:400;letter-spacing:0.2px;color:#f6f0ec">Live</div>
<div class="t" style="left:2564.0px;top:73.1px;font-family:'Liberation Sans';font-size:30.09px;font-weight:400;letter-spacing:-0.491px;color:#f6f0ec">Sarah Parker</div>
<div class="t" style="left:111.3px;top:244.4px;font-family:'Liberation Sans';font-size:30.23px;font-weight:400;letter-spacing:0.529px;color:#1d1919;-webkit-text-stroke:0.91px #1d1919">Instrumentpanel</div>
<div class="t" style="left:113.3px;top:325.2px;font-family:'Liberation Sans';font-size:29.94px;font-weight:400;letter-spacing:0.2px;color:#4a4141">WordPress-webbplatser</div>
<div class="t" style="left:111.8px;top:405.2px;font-family:'Liberation Sans';font-size:29.94px;font-weight:400;letter-spacing:0.3px;color:#4a4141">Statiska webbplatser</div>
<div class="t" style="left:112.8px;top:485.2px;font-family:'Liberation Sans';font-size:29.94px;font-weight:400;letter-spacing:0.267px;color:#4a4141">Applikationer</div>
<div class="t" style="left:110.8px;top:565.4px;font-family:'Liberation Sans';font-size:29.94px;font-weight:400;letter-spacing:0.113px;color:#4a4141">Databaser</div>
<div class="t" style="left:110.8px;top:645.6px;font-family:'Liberation Sans';font-size:29.94px;font-weight:400;letter-spacing:-1.4px;color:#4a4141">DNS</div>
<div class="t" style="left:600.4px;top:230.5px;font-family:'Liberation Serif';font-size:67.66px;font-weight:400;letter-spacing:-0.282px;color:#1d1919">WordPress-analyser</div>
<div class="t" style="left:563.0px;top:395.7px;font-family:'Liberation Sans';font-size:41.86px;font-weight:400;letter-spacing:1.044px;color:#1d1919;-webkit-text-stroke:1.26px #1d1919">Resurs-användning</div>
<div class="t" style="left:1435.0px;top:402.9px;font-family:'Liberation Sans';font-size:29.65px;font-weight:400;letter-spacing:-0.1px;color:#4a4141">Visa analytics</div>
<div class="t" style="left:564.0px;top:470.7px;font-family:'Liberation Sans';font-size:29.22px;font-weight:400;letter-spacing:0.044px;color:#7a6562">27 Juni - 27 Juli</div>
<div class="t" style="left:964.5px;top:588.0px;font-family:'Liberation Sans';font-size:22.24px;font-weight:400;letter-spacing:0.94px;color:#1d1919;-webkit-text-stroke:0.67px #1d1919">Denna månad</div>
<div class="t" style="left:963.5px;top:613.6px;font-family:'Liberation Sans';font-size:20.06px;font-weight:400;letter-spacing:0.2px;color:#4a4141">Dag 28 av 31</div>
<div class="t" style="left:964.5px;top:664.0px;font-family:'Liberation Sans';font-size:22.24px;font-weight:400;letter-spacing:0.95px;color:#1d1919;-webkit-text-stroke:0.67px #1d1919">Besök</div>
<div class="t" style="left:964.5px;top:689.0px;font-family:'Liberation Sans';font-size:20.06px;font-weight:400;letter-spacing:0.241px;color:#4a4141">7,338,254 av 10,000,000</div>
<div class="t" style="left:964.5px;top:740.0px;font-family:'Liberation Sans';font-size:22.24px;font-weight:400;letter-spacing:1.269px;color:#1d1919;-webkit-text-stroke:0.67px #1d1919">CDN-användning</div>
<div class="t" style="left:964.5px;top:765.0px;font-family:'Liberation Sans';font-size:20.06px;font-weight:400;letter-spacing:-0.156px;color:#4a4141">21.59 GB av 25 GB</div>
<div class="t" style="left:964.5px;top:816.0px;font-family:'Liberation Sans';font-size:22.24px;font-weight:400;letter-spacing:1.486px;color:#1d1919;-webkit-text-stroke:0.67px #1d1919">Diskutrymmes-användning</div>
<div class="t" style="left:964.5px;top:841.0px;font-family:'Liberation Sans';font-size:20.06px;font-weight:400;letter-spacing:-0.307px;color:#4a4141">1.34 GB av 2 GB</div>
<div class="t" style="left:965.5px;top:892.0px;font-family:'Liberation Sans';font-size:22.24px;font-weight:400;letter-spacing:1.19px;color:#1d1919;-webkit-text-stroke:0.67px #1d1919">Webbplatser</div>
<div class="t" style="left:964.5px;top:917.0px;font-family:'Liberation Sans';font-size:20.06px;font-weight:400;letter-spacing:0.633px;color:#4a4141">538 av 600</div>
<div class="t" style="left:1746.8px;top:396.5px;font-family:'Liberation Sans';font-size:41.86px;font-weight:400;letter-spacing:1.4px;color:#1d1919;-webkit-text-stroke:1.26px #1d1919">Bandbredd</div>
<div class="t" style="left:2621.0px;top:403.0px;font-family:'Liberation Sans';font-size:29.65px;font-weight:400;letter-spacing:-0.1px;color:#4a4141">Visa analytics</div>
<div class="t" style="left:1747.8px;top:470.5px;font-family:'Liberation Sans';font-size:29.22px;font-weight:400;letter-spacing:-0.094px;color:#7a6562">17 Juni - 24 Juli</div>
<div class="t" style="left:1748.3px;top:539.0px;font-family:'Liberation Sans';font-size:69.77px;font-weight:400;letter-spacing:-1.35px;color:#1d1919">2.74 TB</div>
<div class="t" style="left:563.2px;top:1120.9px;font-family:'Liberation Sans';font-size:32.99px;font-weight:400;letter-spacing:0.11px;color:#1d1919;-webkit-text-stroke:0.99px #1d1919">Unika besök</div>
<div class="t" style="left:1472.1px;top:1126.5px;font-family:'Liberation Sans';font-size:23.11px;font-weight:400;letter-spacing:0.077px;color:#4a4141">Visa analytics</div>
<div class="t" style="left:562.5px;top:1184.2px;font-family:'Liberation Sans';font-size:29.22px;font-weight:400;letter-spacing:-0.106px;color:#7a6562">17 Juni - 24 Juli</div>
<div class="t" style="left:561.7px;top:1253.1px;font-family:'Liberation Sans';font-size:68.61px;font-weight:400;letter-spacing:-0.4px;color:#1d1919">1,649,753</div>
<div class="t" style="left:1748.8px;top:1121.0px;font-family:'Liberation Sans';font-size:32.99px;font-weight:400;letter-spacing:0.346px;color:#1d1919;-webkit-text-stroke:0.99px #1d1919">CDN-användning</div>
<div class="t" style="left:2658.0px;top:1126.5px;font-family:'Liberation Sans';font-size:23.11px;font-weight:400;letter-spacing:0.077px;color:#4a4141">Visa analytics</div>
<div class="t" style="left:1747.8px;top:1184.2px;font-family:'Liberation Sans';font-size:29.22px;font-weight:400;letter-spacing:-0.106px;color:#7a6562">17 Juni - 24 Juli</div>
<div class="t" style="left:1749.4px;top:1253.2px;font-family:'Liberation Sans';font-size:68.61px;font-weight:400;letter-spacing:-2.6px;color:#1d1919">5.18 TB</div>
<div class="t" style="left:563.3px;top:1807.7px;font-family:'Liberation Sans';font-size:41.86px;font-weight:400;letter-spacing:0.882px;color:#1d1919;-webkit-text-stroke:1.26px #1d1919">Resurscenter</div>
<div class="t" style="left:2080.5px;top:1814.9px;font-family:'Liberation Sans';font-size:29.8px;font-weight:400;letter-spacing:-0.38px;color:#7a6562">Sök Resurscenter</div>
<div class="t" style="left:2509.3px;top:1904.6px;font-family:'Liberation Sans';font-size:23.55px;font-weight:400;letter-spacing:0.367px;color:#4a4141">Dokumentation</div>
<div class="t" style="left:2510.3px;top:1958.6px;font-family:'Liberation Sans';font-size:23.55px;font-weight:400;letter-spacing:0.1px;color:#4a4141">Changelog</div>
<div class="t" style="left:2510.3px;top:2012.9px;font-family:'Liberation Sans';font-size:23.55px;font-weight:400;letter-spacing:0.3px;color:#4a4141">Systemstatus</div>
<div class="t" style="left:2509.3px;top:2067.0px;font-family:'Liberation Sans';font-size:23.55px;font-weight:400;letter-spacing:0.245px;color:#4a4141">Kinsta Blogg</div>
<div class="t" style="left:2509.3px;top:2121.0px;font-family:'Liberation Sans';font-size:23.55px;font-weight:400;letter-spacing:0.0px;color:#4a4141">Lär dig WordPress</div>
<div class="t" style="left:1811.8px;top:860.3px;font-family:'Liberation Sans';font-size:21.08px;font-weight:400;letter-spacing:0.0px;color:#7a6562">18</div>
<div class="t" style="left:1961.8px;top:860.3px;font-family:'Liberation Sans';font-size:21.08px;font-weight:400;letter-spacing:0.0px;color:#7a6562">19</div>
<div class="t" style="left:2112.3px;top:860.3px;font-family:'Liberation Sans';font-size:21.08px;font-weight:400;letter-spacing:0.0px;color:#7a6562">20</div>
<div class="t" style="left:2262.3px;top:860.3px;font-family:'Liberation Sans';font-size:21.08px;font-weight:400;letter-spacing:0.0px;color:#7a6562">21</div>
<div class="t" style="left:2412.3px;top:860.3px;font-family:'Liberation Sans';font-size:21.08px;font-weight:400;letter-spacing:0.0px;color:#7a6562">22</div>
<div class="t" style="left:2562.3px;top:860.3px;font-family:'Liberation Sans';font-size:21.08px;font-weight:400;letter-spacing:0.0px;color:#7a6562">23</div>
<div class="t" style="left:2712.3px;top:860.3px;font-family:'Liberation Sans';font-size:21.08px;font-weight:400;letter-spacing:0.0px;color:#7a6562">24</div>
<div class="t" style="left:1809.8px;top:902.3px;font-family:'Liberation Sans';font-size:22.24px;font-weight:400;letter-spacing:0.8px;color:#7a6562">Jul</div>
<div class="t" style="left:626.5px;top:1573.3px;font-family:'Liberation Sans';font-size:21.08px;font-weight:400;letter-spacing:0.0px;color:#7a6562">18</div>
<div class="t" style="left:776.5px;top:1573.3px;font-family:'Liberation Sans';font-size:21.08px;font-weight:400;letter-spacing:0.0px;color:#7a6562">19</div>
<div class="t" style="left:927.0px;top:1573.3px;font-family:'Liberation Sans';font-size:21.08px;font-weight:400;letter-spacing:0.0px;color:#7a6562">20</div>
<div class="t" style="left:1077.0px;top:1573.3px;font-family:'Liberation Sans';font-size:21.08px;font-weight:400;letter-spacing:0.0px;color:#7a6562">21</div>
<div class="t" style="left:1227.0px;top:1573.3px;font-family:'Liberation Sans';font-size:21.08px;font-weight:400;letter-spacing:0.0px;color:#7a6562">22</div>
<div class="t" style="left:1377.0px;top:1573.3px;font-family:'Liberation Sans';font-size:21.08px;font-weight:400;letter-spacing:0.0px;color:#7a6562">23</div>
<div class="t" style="left:1527.0px;top:1573.3px;font-family:'Liberation Sans';font-size:21.08px;font-weight:400;letter-spacing:0.0px;color:#7a6562">24</div>
<div class="t" style="left:624.5px;top:1615.6px;font-family:'Liberation Sans';font-size:22.24px;font-weight:400;letter-spacing:0.8px;color:#7a6562">Jul</div>
<div class="t" style="left:1811.8px;top:1573.3px;font-family:'Liberation Sans';font-size:21.08px;font-weight:400;letter-spacing:0.0px;color:#7a6562">18</div>
<div class="t" style="left:1961.8px;top:1573.3px;font-family:'Liberation Sans';font-size:21.08px;font-weight:400;letter-spacing:0.0px;color:#7a6562">19</div>
<div class="t" style="left:2112.3px;top:1573.3px;font-family:'Liberation Sans';font-size:21.08px;font-weight:400;letter-spacing:0.0px;color:#7a6562">20</div>
<div class="t" style="left:2262.3px;top:1573.3px;font-family:'Liberation Sans';font-size:21.08px;font-weight:400;letter-spacing:0.0px;color:#7a6562">21</div>
<div class="t" style="left:2412.3px;top:1573.3px;font-family:'Liberation Sans';font-size:21.08px;font-weight:400;letter-spacing:0.0px;color:#7a6562">22</div>
<div class="t" style="left:2562.3px;top:1573.3px;font-family:'Liberation Sans';font-size:21.08px;font-weight:400;letter-spacing:0.0px;color:#7a6562">23</div>
<div class="t" style="left:2712.3px;top:1573.3px;font-family:'Liberation Sans';font-size:21.08px;font-weight:400;letter-spacing:0.0px;color:#7a6562">24</div>
<div class="t" style="left:1809.8px;top:1615.6px;font-family:'Liberation Sans';font-size:22.24px;font-weight:400;letter-spacing:0.8px;color:#7a6562">Jul</div>
</div></body></html>
